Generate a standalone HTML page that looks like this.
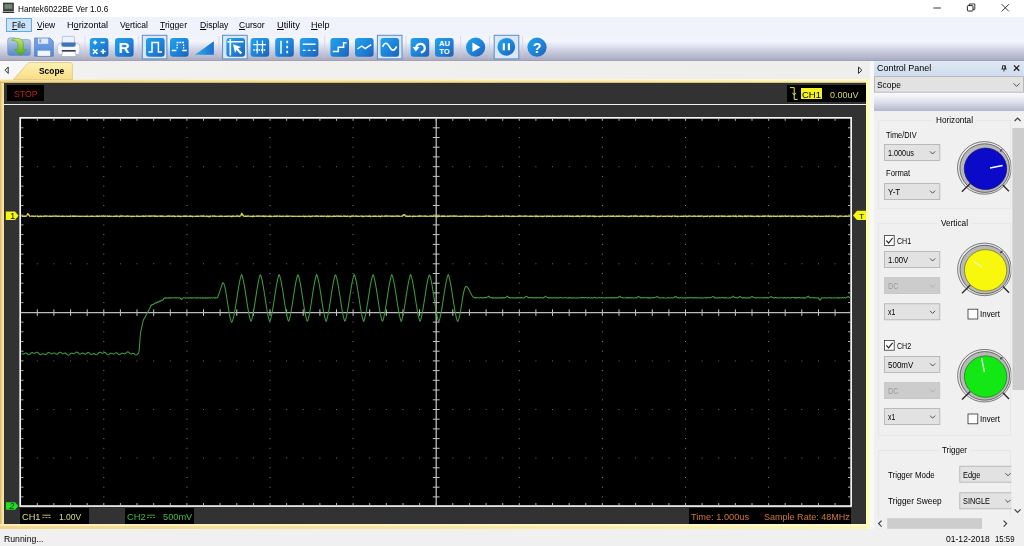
<!DOCTYPE html><html><head><meta charset="utf-8"><title>Hantek6022BE Ver 1.0.6</title><style>
html,body{margin:0;padding:0}
body{width:1024px;height:546px;overflow:hidden;position:relative;background:#f0f0f0;font-family:"Liberation Sans", sans-serif;}
.a{position:absolute}
.t{position:absolute;white-space:nowrap;line-height:1;font-family:"Liberation Sans", sans-serif;display:inline-block;transform-origin:0 0;}
.t u{text-decoration:underline;text-underline-offset:1px;text-decoration-thickness:0.8px}
</style></head><body>
<div class="a" style="left:0;top:0;width:1024px;height:16.6px;background:#fff"></div>
<div class="a" style="left:0;top:16.6px;width:1024px;height:17px;background:#f0f2fc"></div>
<div class="a" style="left:0;top:33.4px;width:1024px;height:28px;background:linear-gradient(#eef0fb 0%,#f2f4fd 8%,#f3f4fc 30%,#dcdeee 50%,#c5c7db 70%,#b1b3c9 90%,#a6a6b8 100%)"></div>
<div class="a" style="left:0;top:60.2px;width:1024px;height:1.2px;background:#a2a2b2"></div>
<div class="a" style="left:6.4px;top:18px;width:25.2px;height:13.7px;background:#cbe3f8;border:1px solid #62aae2;box-sizing:border-box"></div>
<div class="a" style="left:0;top:61.4px;width:870px;height:18.2px;background:linear-gradient(90deg,#f8f8f8 0,#f1f1ef 9%,#eeeeec 100%)"></div>
<div class="a" style="left:0;top:79.2px;width:870.4px;height:449.6px;background:linear-gradient(90deg,#f3d88c 0%,#f6e498 40%,#fbf6b4 100%)"></div>
<div class="a" style="left:0;top:79.2px;width:866px;height:4.2px;background:linear-gradient(rgba(255,255,240,0.75) 0%,rgba(255,250,200,0.15) 40%,rgba(160,130,40,0.0) 60%,rgba(150,125,50,0.55) 100%)"></div>
<div class="a" style="left:0;top:83.4px;width:4.2px;height:441px;background:linear-gradient(90deg,#d8b468,#f6e0a0 60%,#f8e4a8)"></div>
<div class="a" style="left:865.8px;top:80.4px;width:4.6px;height:448.4px;background:#fcfcbc"></div>
<div class="a" style="left:0px;top:524.4px;width:866px;height:1.2px;background:rgba(255,255,235,0.55)"></div>
<div class="a" style="left:4.2px;top:83.4px;width:861.6px;height:441px;background:#323233"></div>
<div class="a" style="left:4.2px;top:103.6px;width:861.6px;height:1.4px;background:#f2f2f2"></div>
<div class="a" style="left:6.8px;top:85.4px;width:37.2px;height:15.6px;background:#000"></div>
<div class="a" style="left:787px;top:85px;width:78.6px;height:17.4px;background:#000"></div>
<div class="a" style="left:801px;top:88.2px;width:21px;height:11px;background:#f4f420"></div>
<div class="a" style="left:20px;top:508.4px;width:69px;height:15.8px;background:#000"></div>
<div class="a" style="left:124.6px;top:508.4px;width:69.6px;height:15.8px;background:#000"></div>
<div class="a" style="left:689.2px;top:508.4px;width:162px;height:15.8px;background:#000"></div>
<svg width="1024" height="546" viewBox="0 0 1024 546" style="position:absolute;left:0;top:0"><defs><linearGradient id="tb" x1="0" y1="0" x2="0" y2="1"><stop offset="0" stop-color="#fdf2b4"/><stop offset="1" stop-color="#f8dc84"/></linearGradient></defs><path d="M13.4 79.6L27.4 63.8Q28.6 62.6 30.4 62.6H70.4Q72.4 62.6 72.4 64.6V79.6Z" fill="url(#tb)" stroke="#d4c080" stroke-width="0.7"/></svg>
<div class="a" style="left:870.4px;top:61.2px;width:4px;height:468px;background:#f8f8f8"></div>
<div class="a" style="left:874.4px;top:60.8px;width:149.6px;height:15.6px;background:linear-gradient(#dfe9f5,#cfdcec)"></div>
<div class="a" style="left:874.4px;top:92.4px;width:149.6px;height:18.4px;background:linear-gradient(#fcfcfe 0%,#f0f1f8 25%,#d8dae8 60%,#b4b7cc 100%)"></div>
<div class="a" style="left:874.4px;top:110.8px;width:149.6px;height:418.6px;background:#f0f0f0"></div>
<svg width="1024" height="546" viewBox="0 0 1024 546" style="position:absolute;left:0;top:0">
<rect x="20.2" y="117.85" width="830.95" height="388.2" fill="#000" stroke="#f4f4f4" stroke-width="1.7"/>
<path d="M103.3 127.8h1M103.3 137.5h1M103.3 147.2h1M103.3 156.9h1M103.3 166.7h1M103.3 176.4h1M103.3 186.1h1M103.3 195.8h1M103.3 205.5h1M103.3 215.2h1M103.3 224.9h1M103.3 234.6h1M103.3 244.4h1M103.3 254.1h1M103.3 263.8h1M103.3 273.5h1M103.3 283.2h1M103.3 292.9h1M103.3 302.6h1M103.3 312.4h1M103.3 322.1h1M103.3 331.8h1M103.3 341.5h1M103.3 351.2h1M103.3 360.9h1M103.3 370.6h1M103.3 380.3h1M103.3 390.0h1M103.3 399.8h1M103.3 409.5h1M103.3 419.2h1M103.3 428.9h1M103.3 438.6h1M103.3 448.3h1M103.3 458.0h1M103.3 467.8h1M103.3 477.5h1M103.3 487.2h1M103.3 496.9h1M186.4 127.8h1M186.4 137.5h1M186.4 147.2h1M186.4 156.9h1M186.4 166.7h1M186.4 176.4h1M186.4 186.1h1M186.4 195.8h1M186.4 205.5h1M186.4 215.2h1M186.4 224.9h1M186.4 234.6h1M186.4 244.4h1M186.4 254.1h1M186.4 263.8h1M186.4 273.5h1M186.4 283.2h1M186.4 292.9h1M186.4 302.6h1M186.4 312.4h1M186.4 322.1h1M186.4 331.8h1M186.4 341.5h1M186.4 351.2h1M186.4 360.9h1M186.4 370.6h1M186.4 380.3h1M186.4 390.0h1M186.4 399.8h1M186.4 409.5h1M186.4 419.2h1M186.4 428.9h1M186.4 438.6h1M186.4 448.3h1M186.4 458.0h1M186.4 467.8h1M186.4 477.5h1M186.4 487.2h1M186.4 496.9h1M269.5 127.8h1M269.5 137.5h1M269.5 147.2h1M269.5 156.9h1M269.5 166.7h1M269.5 176.4h1M269.5 186.1h1M269.5 195.8h1M269.5 205.5h1M269.5 215.2h1M269.5 224.9h1M269.5 234.6h1M269.5 244.4h1M269.5 254.1h1M269.5 263.8h1M269.5 273.5h1M269.5 283.2h1M269.5 292.9h1M269.5 302.6h1M269.5 312.4h1M269.5 322.1h1M269.5 331.8h1M269.5 341.5h1M269.5 351.2h1M269.5 360.9h1M269.5 370.6h1M269.5 380.3h1M269.5 390.0h1M269.5 399.8h1M269.5 409.5h1M269.5 419.2h1M269.5 428.9h1M269.5 438.6h1M269.5 448.3h1M269.5 458.0h1M269.5 467.8h1M269.5 477.5h1M269.5 487.2h1M269.5 496.9h1M352.6 127.8h1M352.6 137.5h1M352.6 147.2h1M352.6 156.9h1M352.6 166.7h1M352.6 176.4h1M352.6 186.1h1M352.6 195.8h1M352.6 205.5h1M352.6 215.2h1M352.6 224.9h1M352.6 234.6h1M352.6 244.4h1M352.6 254.1h1M352.6 263.8h1M352.6 273.5h1M352.6 283.2h1M352.6 292.9h1M352.6 302.6h1M352.6 312.4h1M352.6 322.1h1M352.6 331.8h1M352.6 341.5h1M352.6 351.2h1M352.6 360.9h1M352.6 370.6h1M352.6 380.3h1M352.6 390.0h1M352.6 399.8h1M352.6 409.5h1M352.6 419.2h1M352.6 428.9h1M352.6 438.6h1M352.6 448.3h1M352.6 458.0h1M352.6 467.8h1M352.6 477.5h1M352.6 487.2h1M352.6 496.9h1M518.8 127.8h1M518.8 137.5h1M518.8 147.2h1M518.8 156.9h1M518.8 166.7h1M518.8 176.4h1M518.8 186.1h1M518.8 195.8h1M518.8 205.5h1M518.8 215.2h1M518.8 224.9h1M518.8 234.6h1M518.8 244.4h1M518.8 254.1h1M518.8 263.8h1M518.8 273.5h1M518.8 283.2h1M518.8 292.9h1M518.8 302.6h1M518.8 312.4h1M518.8 322.1h1M518.8 331.8h1M518.8 341.5h1M518.8 351.2h1M518.8 360.9h1M518.8 370.6h1M518.8 380.3h1M518.8 390.0h1M518.8 399.8h1M518.8 409.5h1M518.8 419.2h1M518.8 428.9h1M518.8 438.6h1M518.8 448.3h1M518.8 458.0h1M518.8 467.8h1M518.8 477.5h1M518.8 487.2h1M518.8 496.9h1M601.9 127.8h1M601.9 137.5h1M601.9 147.2h1M601.9 156.9h1M601.9 166.7h1M601.9 176.4h1M601.9 186.1h1M601.9 195.8h1M601.9 205.5h1M601.9 215.2h1M601.9 224.9h1M601.9 234.6h1M601.9 244.4h1M601.9 254.1h1M601.9 263.8h1M601.9 273.5h1M601.9 283.2h1M601.9 292.9h1M601.9 302.6h1M601.9 312.4h1M601.9 322.1h1M601.9 331.8h1M601.9 341.5h1M601.9 351.2h1M601.9 360.9h1M601.9 370.6h1M601.9 380.3h1M601.9 390.0h1M601.9 399.8h1M601.9 409.5h1M601.9 419.2h1M601.9 428.9h1M601.9 438.6h1M601.9 448.3h1M601.9 458.0h1M601.9 467.8h1M601.9 477.5h1M601.9 487.2h1M601.9 496.9h1M685.0 127.8h1M685.0 137.5h1M685.0 147.2h1M685.0 156.9h1M685.0 166.7h1M685.0 176.4h1M685.0 186.1h1M685.0 195.8h1M685.0 205.5h1M685.0 215.2h1M685.0 224.9h1M685.0 234.6h1M685.0 244.4h1M685.0 254.1h1M685.0 263.8h1M685.0 273.5h1M685.0 283.2h1M685.0 292.9h1M685.0 302.6h1M685.0 312.4h1M685.0 322.1h1M685.0 331.8h1M685.0 341.5h1M685.0 351.2h1M685.0 360.9h1M685.0 370.6h1M685.0 380.3h1M685.0 390.0h1M685.0 399.8h1M685.0 409.5h1M685.0 419.2h1M685.0 428.9h1M685.0 438.6h1M685.0 448.3h1M685.0 458.0h1M685.0 467.8h1M685.0 477.5h1M685.0 487.2h1M685.0 496.9h1M768.1 127.8h1M768.1 137.5h1M768.1 147.2h1M768.1 156.9h1M768.1 166.7h1M768.1 176.4h1M768.1 186.1h1M768.1 195.8h1M768.1 205.5h1M768.1 215.2h1M768.1 224.9h1M768.1 234.6h1M768.1 244.4h1M768.1 254.1h1M768.1 263.8h1M768.1 273.5h1M768.1 283.2h1M768.1 292.9h1M768.1 302.6h1M768.1 312.4h1M768.1 322.1h1M768.1 331.8h1M768.1 341.5h1M768.1 351.2h1M768.1 360.9h1M768.1 370.6h1M768.1 380.3h1M768.1 390.0h1M768.1 399.8h1M768.1 409.5h1M768.1 419.2h1M768.1 428.9h1M768.1 438.6h1M768.1 448.3h1M768.1 458.0h1M768.1 467.8h1M768.1 477.5h1M768.1 487.2h1M768.1 496.9h1" stroke="#808080" stroke-width="1" fill="none"/>
<path d="M36.8 166.7h1M53.4 166.7h1M70.1 166.7h1M86.7 166.7h1M119.9 166.7h1M136.5 166.7h1M153.2 166.7h1M169.8 166.7h1M203.0 166.7h1M219.6 166.7h1M236.3 166.7h1M252.9 166.7h1M286.1 166.7h1M302.7 166.7h1M319.4 166.7h1M336.0 166.7h1M369.2 166.7h1M385.8 166.7h1M402.5 166.7h1M419.1 166.7h1M452.3 166.7h1M468.9 166.7h1M485.6 166.7h1M502.2 166.7h1M535.4 166.7h1M552.0 166.7h1M568.7 166.7h1M585.3 166.7h1M618.5 166.7h1M635.1 166.7h1M651.8 166.7h1M668.4 166.7h1M701.6 166.7h1M718.2 166.7h1M734.9 166.7h1M751.5 166.7h1M784.7 166.7h1M801.3 166.7h1M818.0 166.7h1M834.6 166.7h1M36.8 215.2h1M53.4 215.2h1M70.1 215.2h1M86.7 215.2h1M119.9 215.2h1M136.5 215.2h1M153.2 215.2h1M169.8 215.2h1M203.0 215.2h1M219.6 215.2h1M236.3 215.2h1M252.9 215.2h1M286.1 215.2h1M302.7 215.2h1M319.4 215.2h1M336.0 215.2h1M369.2 215.2h1M385.8 215.2h1M402.5 215.2h1M419.1 215.2h1M452.3 215.2h1M468.9 215.2h1M485.6 215.2h1M502.2 215.2h1M535.4 215.2h1M552.0 215.2h1M568.7 215.2h1M585.3 215.2h1M618.5 215.2h1M635.1 215.2h1M651.8 215.2h1M668.4 215.2h1M701.6 215.2h1M718.2 215.2h1M734.9 215.2h1M751.5 215.2h1M784.7 215.2h1M801.3 215.2h1M818.0 215.2h1M834.6 215.2h1M36.8 263.8h1M53.4 263.8h1M70.1 263.8h1M86.7 263.8h1M119.9 263.8h1M136.5 263.8h1M153.2 263.8h1M169.8 263.8h1M203.0 263.8h1M219.6 263.8h1M236.3 263.8h1M252.9 263.8h1M286.1 263.8h1M302.7 263.8h1M319.4 263.8h1M336.0 263.8h1M369.2 263.8h1M385.8 263.8h1M402.5 263.8h1M419.1 263.8h1M452.3 263.8h1M468.9 263.8h1M485.6 263.8h1M502.2 263.8h1M535.4 263.8h1M552.0 263.8h1M568.7 263.8h1M585.3 263.8h1M618.5 263.8h1M635.1 263.8h1M651.8 263.8h1M668.4 263.8h1M701.6 263.8h1M718.2 263.8h1M734.9 263.8h1M751.5 263.8h1M784.7 263.8h1M801.3 263.8h1M818.0 263.8h1M834.6 263.8h1M36.8 360.9h1M53.4 360.9h1M70.1 360.9h1M86.7 360.9h1M119.9 360.9h1M136.5 360.9h1M153.2 360.9h1M169.8 360.9h1M203.0 360.9h1M219.6 360.9h1M236.3 360.9h1M252.9 360.9h1M286.1 360.9h1M302.7 360.9h1M319.4 360.9h1M336.0 360.9h1M369.2 360.9h1M385.8 360.9h1M402.5 360.9h1M419.1 360.9h1M452.3 360.9h1M468.9 360.9h1M485.6 360.9h1M502.2 360.9h1M535.4 360.9h1M552.0 360.9h1M568.7 360.9h1M585.3 360.9h1M618.5 360.9h1M635.1 360.9h1M651.8 360.9h1M668.4 360.9h1M701.6 360.9h1M718.2 360.9h1M734.9 360.9h1M751.5 360.9h1M784.7 360.9h1M801.3 360.9h1M818.0 360.9h1M834.6 360.9h1M36.8 409.5h1M53.4 409.5h1M70.1 409.5h1M86.7 409.5h1M119.9 409.5h1M136.5 409.5h1M153.2 409.5h1M169.8 409.5h1M203.0 409.5h1M219.6 409.5h1M236.3 409.5h1M252.9 409.5h1M286.1 409.5h1M302.7 409.5h1M319.4 409.5h1M336.0 409.5h1M369.2 409.5h1M385.8 409.5h1M402.5 409.5h1M419.1 409.5h1M452.3 409.5h1M468.9 409.5h1M485.6 409.5h1M502.2 409.5h1M535.4 409.5h1M552.0 409.5h1M568.7 409.5h1M585.3 409.5h1M618.5 409.5h1M635.1 409.5h1M651.8 409.5h1M668.4 409.5h1M701.6 409.5h1M718.2 409.5h1M734.9 409.5h1M751.5 409.5h1M784.7 409.5h1M801.3 409.5h1M818.0 409.5h1M834.6 409.5h1M36.8 458.0h1M53.4 458.0h1M70.1 458.0h1M86.7 458.0h1M119.9 458.0h1M136.5 458.0h1M153.2 458.0h1M169.8 458.0h1M203.0 458.0h1M219.6 458.0h1M236.3 458.0h1M252.9 458.0h1M286.1 458.0h1M302.7 458.0h1M319.4 458.0h1M336.0 458.0h1M369.2 458.0h1M385.8 458.0h1M402.5 458.0h1M419.1 458.0h1M452.3 458.0h1M468.9 458.0h1M485.6 458.0h1M502.2 458.0h1M535.4 458.0h1M552.0 458.0h1M568.7 458.0h1M585.3 458.0h1M618.5 458.0h1M635.1 458.0h1M651.8 458.0h1M668.4 458.0h1M701.6 458.0h1M718.2 458.0h1M734.9 458.0h1M751.5 458.0h1M784.7 458.0h1M801.3 458.0h1M818.0 458.0h1M834.6 458.0h1" stroke="#686868" stroke-width="1" fill="none"/>
<path d="M37.3 118.6v2.2M37.3 505.3v-2.2M53.9 118.6v2.2M53.9 505.3v-2.2M70.6 118.6v2.2M70.6 505.3v-2.2M87.2 118.6v2.2M87.2 505.3v-2.2M103.8 118.6v2.2M103.8 505.3v-2.2M120.4 118.6v2.2M120.4 505.3v-2.2M137.0 118.6v2.2M137.0 505.3v-2.2M153.7 118.6v2.2M153.7 505.3v-2.2M170.3 118.6v2.2M170.3 505.3v-2.2M186.9 118.6v2.2M186.9 505.3v-2.2M203.5 118.6v2.2M203.5 505.3v-2.2M220.1 118.6v2.2M220.1 505.3v-2.2M236.8 118.6v2.2M236.8 505.3v-2.2M253.4 118.6v2.2M253.4 505.3v-2.2M270.0 118.6v2.2M270.0 505.3v-2.2M286.6 118.6v2.2M286.6 505.3v-2.2M303.2 118.6v2.2M303.2 505.3v-2.2M319.9 118.6v2.2M319.9 505.3v-2.2M336.5 118.6v2.2M336.5 505.3v-2.2M353.1 118.6v2.2M353.1 505.3v-2.2M369.7 118.6v2.2M369.7 505.3v-2.2M386.3 118.6v2.2M386.3 505.3v-2.2M403.0 118.6v2.2M403.0 505.3v-2.2M419.6 118.6v2.2M419.6 505.3v-2.2M436.2 118.6v2.2M436.2 505.3v-2.2M452.8 118.6v2.2M452.8 505.3v-2.2M469.4 118.6v2.2M469.4 505.3v-2.2M486.1 118.6v2.2M486.1 505.3v-2.2M502.7 118.6v2.2M502.7 505.3v-2.2M519.3 118.6v2.2M519.3 505.3v-2.2M535.9 118.6v2.2M535.9 505.3v-2.2M552.5 118.6v2.2M552.5 505.3v-2.2M569.2 118.6v2.2M569.2 505.3v-2.2M585.8 118.6v2.2M585.8 505.3v-2.2M602.4 118.6v2.2M602.4 505.3v-2.2M619.0 118.6v2.2M619.0 505.3v-2.2M635.6 118.6v2.2M635.6 505.3v-2.2M652.3 118.6v2.2M652.3 505.3v-2.2M668.9 118.6v2.2M668.9 505.3v-2.2M685.5 118.6v2.2M685.5 505.3v-2.2M702.1 118.6v2.2M702.1 505.3v-2.2M718.7 118.6v2.2M718.7 505.3v-2.2M735.4 118.6v2.2M735.4 505.3v-2.2M752.0 118.6v2.2M752.0 505.3v-2.2M768.6 118.6v2.2M768.6 505.3v-2.2M785.2 118.6v2.2M785.2 505.3v-2.2M801.8 118.6v2.2M801.8 505.3v-2.2M818.5 118.6v2.2M818.5 505.3v-2.2M835.1 118.6v2.2M835.1 505.3v-2.2M21.2 127.8h2.2M850.3 127.8h-2.2M21.2 137.5h2.2M850.3 137.5h-2.2M21.2 147.2h2.2M850.3 147.2h-2.2M21.2 156.9h2.2M850.3 156.9h-2.2M21.2 166.7h2.2M850.3 166.7h-2.2M21.2 176.4h2.2M850.3 176.4h-2.2M21.2 186.1h2.2M850.3 186.1h-2.2M21.2 195.8h2.2M850.3 195.8h-2.2M21.2 205.5h2.2M850.3 205.5h-2.2M21.2 215.2h2.2M850.3 215.2h-2.2M21.2 224.9h2.2M850.3 224.9h-2.2M21.2 234.6h2.2M850.3 234.6h-2.2M21.2 244.4h2.2M850.3 244.4h-2.2M21.2 254.1h2.2M850.3 254.1h-2.2M21.2 263.8h2.2M850.3 263.8h-2.2M21.2 273.5h2.2M850.3 273.5h-2.2M21.2 283.2h2.2M850.3 283.2h-2.2M21.2 292.9h2.2M850.3 292.9h-2.2M21.2 302.6h2.2M850.3 302.6h-2.2M21.2 312.4h2.2M850.3 312.4h-2.2M21.2 322.1h2.2M850.3 322.1h-2.2M21.2 331.8h2.2M850.3 331.8h-2.2M21.2 341.5h2.2M850.3 341.5h-2.2M21.2 351.2h2.2M850.3 351.2h-2.2M21.2 360.9h2.2M850.3 360.9h-2.2M21.2 370.6h2.2M850.3 370.6h-2.2M21.2 380.3h2.2M850.3 380.3h-2.2M21.2 390.0h2.2M850.3 390.0h-2.2M21.2 399.8h2.2M850.3 399.8h-2.2M21.2 409.5h2.2M850.3 409.5h-2.2M21.2 419.2h2.2M850.3 419.2h-2.2M21.2 428.9h2.2M850.3 428.9h-2.2M21.2 438.6h2.2M850.3 438.6h-2.2M21.2 448.3h2.2M850.3 448.3h-2.2M21.2 458.0h2.2M850.3 458.0h-2.2M21.2 467.8h2.2M850.3 467.8h-2.2M21.2 477.5h2.2M850.3 477.5h-2.2M21.2 487.2h2.2M850.3 487.2h-2.2M21.2 496.9h2.2M850.3 496.9h-2.2" stroke="#b8b8b8" stroke-width="1" fill="none"/>
<path d="M20.7 312.6H850.7M436.2 118.1V505.8" stroke="#bcbcbc" stroke-width="1.3" fill="none"/>
<path d="M37.3 309.3v6.6M53.9 309.3v6.6M70.6 309.3v6.6M87.2 309.3v6.6M103.8 309.3v6.6M120.4 309.3v6.6M137.0 309.3v6.6M153.7 309.3v6.6M170.3 309.3v6.6M186.9 309.3v6.6M203.5 309.3v6.6M220.1 309.3v6.6M236.8 309.3v6.6M253.4 309.3v6.6M270.0 309.3v6.6M286.6 309.3v6.6M303.2 309.3v6.6M319.9 309.3v6.6M336.5 309.3v6.6M353.1 309.3v6.6M369.7 309.3v6.6M386.3 309.3v6.6M403.0 309.3v6.6M419.6 309.3v6.6M436.2 309.3v6.6M452.8 309.3v6.6M469.4 309.3v6.6M486.1 309.3v6.6M502.7 309.3v6.6M519.3 309.3v6.6M535.9 309.3v6.6M552.5 309.3v6.6M569.2 309.3v6.6M585.8 309.3v6.6M602.4 309.3v6.6M619.0 309.3v6.6M635.6 309.3v6.6M652.3 309.3v6.6M668.9 309.3v6.6M685.5 309.3v6.6M702.1 309.3v6.6M718.7 309.3v6.6M735.4 309.3v6.6M752.0 309.3v6.6M768.6 309.3v6.6M785.2 309.3v6.6M801.8 309.3v6.6M818.5 309.3v6.6M835.1 309.3v6.6M432.8 127.8h6.8M432.8 137.5h6.8M432.8 147.2h6.8M432.8 156.9h6.8M432.8 166.7h6.8M432.8 176.4h6.8M432.8 186.1h6.8M432.8 195.8h6.8M432.8 205.5h6.8M432.8 215.2h6.8M432.8 224.9h6.8M432.8 234.6h6.8M432.8 244.4h6.8M432.8 254.1h6.8M432.8 263.8h6.8M432.8 273.5h6.8M432.8 283.2h6.8M432.8 292.9h6.8M432.8 302.6h6.8M432.8 312.4h6.8M432.8 322.1h6.8M432.8 331.8h6.8M432.8 341.5h6.8M432.8 351.2h6.8M432.8 360.9h6.8M432.8 370.6h6.8M432.8 380.3h6.8M432.8 390.0h6.8M432.8 399.8h6.8M432.8 409.5h6.8M432.8 419.2h6.8M432.8 428.9h6.8M432.8 438.6h6.8M432.8 448.3h6.8M432.8 458.0h6.8M432.8 467.8h6.8M432.8 477.5h6.8M432.8 487.2h6.8M432.8 496.9h6.8" stroke="#c4c4c4" stroke-width="1" fill="none"/>
<polyline points="21.7,216.23 22.7,216.16 23.7,216.36 24.7,216.13 25.7,216.31 26.7,215.72 27.7,213.85 28.7,214.73 29.7,216.11 30.7,216.27 31.7,216.13 32.7,216.14 33.7,216.27 34.7,216.43 35.7,216.15 36.7,216.19 37.7,216.35 38.7,216.48 39.7,216.33 40.7,216.26 41.7,216.49 42.7,216.12 43.7,216.44 44.7,216.22 45.7,216.16 46.7,216.15 47.7,216.22 48.7,216.43 49.7,216.17 50.7,216.33 51.7,216.36 52.7,216.25 53.7,216.32 54.7,216.13 55.7,216.12 56.7,216.18 57.7,216.37 58.7,216.27 59.7,216.23 60.7,216.33 61.7,216.28 62.7,216.22 63.7,216.42 64.7,216.38 65.7,216.20 66.7,216.33 67.7,216.31 68.7,216.45 69.7,216.39 70.7,216.22 71.7,216.49 72.7,216.15 73.7,216.27 74.7,216.40 75.7,216.16 76.7,216.30 77.7,216.12 78.7,216.37 79.7,216.41 80.7,216.33 81.7,216.45 82.7,216.23 83.7,216.38 84.7,216.34 85.7,216.33 86.7,216.28 87.7,216.44 88.7,216.48 89.7,216.29 90.7,216.37 91.7,216.12 92.7,216.38 93.7,216.36 94.7,216.50 95.7,216.43 96.7,216.21 97.7,216.25 98.7,216.37 99.7,216.11 100.7,216.28 101.7,216.17 102.7,216.15 103.7,216.12 104.7,216.41 105.7,216.15 106.7,216.20 107.7,216.26 108.7,216.45 109.7,216.13 110.7,216.28 111.7,216.32 112.7,216.45 113.7,216.43 114.7,216.45 115.7,216.21 116.7,216.27 117.7,216.24 118.7,216.45 119.7,216.48 120.7,216.16 121.7,216.17 122.7,216.19 123.7,216.19 124.7,216.29 125.7,216.34 126.7,216.21 127.7,216.10 128.7,216.27 129.7,216.25 130.7,216.33 131.7,216.48 132.7,216.38 133.7,216.31 134.7,216.35 135.7,216.37 136.7,216.12 137.7,216.46 138.7,216.41 139.7,216.45 140.7,216.42 141.7,216.26 142.7,216.26 143.7,216.14 144.7,216.35 145.7,216.12 146.7,216.13 147.7,216.18 148.7,216.16 149.7,216.24 150.7,216.12 151.7,216.10 152.7,216.16 153.7,216.14 154.7,216.25 155.7,216.11 156.7,216.45 157.7,216.35 158.7,216.16 159.7,216.20 160.7,216.24 161.7,216.25 162.7,216.15 163.7,216.44 164.7,216.50 165.7,216.29 166.7,216.29 167.7,216.13 168.7,216.14 169.7,216.24 170.7,216.21 171.7,216.43 172.7,216.16 173.7,216.11 174.7,216.48 175.7,216.31 176.7,216.16 177.7,216.32 178.7,216.11 179.7,216.31 180.7,216.49 181.7,216.45 182.7,216.38 183.7,216.20 184.7,216.25 185.7,216.17 186.7,216.41 187.7,216.31 188.7,216.41 189.7,216.23 190.7,216.19 191.7,216.42 192.7,216.49 193.7,216.44 194.7,216.42 195.7,216.43 196.7,216.40 197.7,216.19 198.7,216.31 199.7,216.24 200.7,216.11 201.7,216.11 202.7,216.21 203.7,216.20 204.7,216.38 205.7,216.48 206.7,216.28 207.7,216.47 208.7,216.50 209.7,216.48 210.7,216.25 211.7,216.19 212.7,216.19 213.7,216.18 214.7,216.18 215.7,216.35 216.7,216.46 217.7,216.44 218.7,216.29 219.7,216.36 220.7,216.42 221.7,216.13 222.7,216.36 223.7,216.46 224.7,216.41 225.7,216.40 226.7,216.29 227.7,216.17 228.7,216.42 229.7,216.23 230.7,216.42 231.7,216.49 232.7,216.26 233.7,216.26 234.7,216.48 235.7,216.39 236.7,216.17 237.7,216.15 238.7,216.16 239.7,216.46 240.7,215.86 241.7,213.72 242.7,214.74 243.7,216.49 244.7,216.36 245.7,216.24 246.7,216.32 247.7,216.15 248.7,216.11 249.7,216.49 250.7,216.36 251.7,216.31 252.7,216.47 253.7,216.27 254.7,216.45 255.7,216.43 256.7,216.18 257.7,216.20 258.7,216.22 259.7,216.20 260.7,216.33 261.7,216.20 262.7,216.27 263.7,216.15 264.7,216.46 265.7,216.24 266.7,216.28 267.7,216.33 268.7,216.46 269.7,216.27 270.7,216.47 271.7,216.30 272.7,216.31 273.7,216.31 274.7,216.11 275.7,216.28 276.7,216.17 277.7,216.10 278.7,216.42 279.7,216.17 280.7,216.29 281.7,216.39 282.7,216.32 283.7,216.23 284.7,216.31 285.7,216.32 286.7,216.41 287.7,216.14 288.7,216.32 289.7,216.20 290.7,216.21 291.7,216.41 292.7,216.30 293.7,216.32 294.7,216.40 295.7,216.46 296.7,216.28 297.7,216.35 298.7,216.30 299.7,216.30 300.7,216.38 301.7,216.28 302.7,216.31 303.7,216.29 304.7,216.48 305.7,216.38 306.7,216.45 307.7,216.48 308.7,216.20 309.7,216.32 310.7,216.48 311.7,216.44 312.7,216.15 313.7,216.15 314.7,216.28 315.7,216.13 316.7,216.20 317.7,216.13 318.7,216.37 319.7,216.41 320.7,216.46 321.7,216.16 322.7,216.39 323.7,216.36 324.7,216.16 325.7,216.45 326.7,216.49 327.7,216.19 328.7,216.48 329.7,216.26 330.7,216.29 331.7,216.50 332.7,216.43 333.7,216.16 334.7,216.27 335.7,216.31 336.7,216.24 337.7,216.18 338.7,216.23 339.7,216.39 340.7,216.11 341.7,216.32 342.7,216.28 343.7,216.11 344.7,216.23 345.7,216.35 346.7,216.30 347.7,216.13 348.7,216.49 349.7,216.42 350.7,216.49 351.7,216.14 352.7,216.21 353.7,216.12 354.7,216.41 355.7,216.21 356.7,216.15 357.7,216.27 358.7,216.46 359.7,216.43 360.7,216.20 361.7,216.16 362.7,216.47 363.7,216.33 364.7,216.38 365.7,216.14 366.7,216.12 367.7,216.38 368.7,216.27 369.7,216.13 370.7,216.48 371.7,216.35 372.7,216.42 373.7,216.13 374.7,216.44 375.7,216.13 376.7,216.45 377.7,216.28 378.7,216.24 379.7,216.32 380.7,216.47 381.7,216.21 382.7,216.15 383.7,216.31 384.7,216.20 385.7,216.14 386.7,216.16 387.7,216.12 388.7,216.18 389.7,216.22 390.7,216.22 391.7,216.40 392.7,216.22 393.7,216.30 394.7,216.17 395.7,216.24 396.7,216.11 397.7,216.20 398.7,216.11 399.7,216.39 400.7,216.32 401.7,216.18 402.7,215.88 403.7,214.69 404.7,214.91 405.7,216.43 406.7,216.27 407.7,216.30 408.7,216.43 409.7,216.26 410.7,216.30 411.7,216.38 412.7,216.49 413.7,216.24 414.7,216.43 415.7,216.38 416.7,216.35 417.7,216.26 418.7,216.24 419.7,216.12 420.7,216.15 421.7,216.13 422.7,216.40 423.7,216.20 424.7,216.17 425.7,216.13 426.7,216.44 427.7,216.45 428.7,216.37 429.7,216.21 430.7,216.20 431.7,216.22 432.7,216.28 433.7,216.16 434.7,216.28 435.7,216.21 436.7,216.48 437.7,216.49 438.7,216.32 439.7,216.20 440.7,216.49 441.7,216.22 442.7,216.24 443.7,216.10 444.7,216.25 445.7,216.29 446.7,216.30 447.7,216.18 448.7,216.30 449.7,216.10 450.7,216.21 451.7,216.14 452.7,216.26 453.7,216.12 454.7,216.11 455.7,216.22 456.7,216.19 457.7,216.33 458.7,216.31 459.7,216.40 460.7,216.36 461.7,216.39 462.7,216.45 463.7,216.26 464.7,216.23 465.7,216.49 466.7,216.16 467.7,216.39 468.7,216.36 469.7,216.12 470.7,216.43 471.7,216.46 472.7,216.35 473.7,216.39 474.7,216.42 475.7,216.16 476.7,216.31 477.7,216.30 478.7,216.43 479.7,216.42 480.7,216.43 481.7,216.33 482.7,216.46 483.7,216.37 484.7,216.38 485.7,216.19 486.7,216.11 487.7,216.15 488.7,216.24 489.7,216.14 490.7,216.43 491.7,216.32 492.7,216.35 493.7,216.35 494.7,216.37 495.7,216.30 496.7,216.10 497.7,216.42 498.7,216.40 499.7,216.30 500.7,216.31 501.7,216.36 502.7,216.13 503.7,216.39 504.7,216.20 505.7,216.13 506.7,216.21 507.7,216.39 508.7,216.18 509.7,216.40 510.7,216.49 511.7,216.30 512.7,216.25 513.7,216.29 514.7,216.37 515.7,216.41 516.7,216.35 517.7,216.36 518.7,216.13 519.7,216.16 520.7,216.20 521.7,216.40 522.7,216.22 523.7,216.33 524.7,216.10 525.7,216.12 526.7,216.21 527.7,216.37 528.7,216.38 529.7,216.37 530.7,216.22 531.7,216.31 532.7,216.29 533.7,216.29 534.7,216.15 535.7,216.46 536.7,216.18 537.7,216.49 538.7,216.47 539.7,216.11 540.7,216.28 541.7,216.43 542.7,216.49 543.7,216.28 544.7,216.21 545.7,216.18 546.7,216.48 547.7,216.18 548.7,216.33 549.7,216.16 550.7,216.31 551.7,216.48 552.7,216.15 553.7,216.43 554.7,216.30 555.7,216.45 556.7,216.38 557.7,216.19 558.7,216.46 559.7,216.29 560.7,216.11 561.7,216.10 562.7,216.30 563.7,216.28 564.7,216.22 565.7,216.16 566.7,216.24 567.7,216.23 568.7,216.44 569.7,216.10 570.7,216.40 571.7,216.44 572.7,216.15 573.7,216.47 574.7,216.39 575.7,216.46 576.7,216.22 577.7,216.25 578.7,216.26 579.7,216.50 580.7,216.34 581.7,216.24 582.7,216.27 583.7,216.21 584.7,216.12 585.7,216.14 586.7,216.43 587.7,216.21 588.7,216.47 589.7,216.20 590.7,216.21 591.7,216.30 592.7,216.18 593.7,216.25 594.7,216.48 595.7,216.45 596.7,216.42 597.7,216.35 598.7,216.47 599.7,216.48 600.7,216.32 601.7,216.39 602.7,216.12 603.7,216.39 604.7,216.28 605.7,216.40 606.7,216.36 607.7,216.21 608.7,216.12 609.7,216.47 610.7,216.15 611.7,216.29 612.7,216.24 613.7,216.22 614.7,216.40 615.7,216.49 616.7,216.20 617.7,216.36 618.7,216.22 619.7,216.32 620.7,216.26 621.7,216.17 622.7,216.16 623.7,216.18 624.7,216.46 625.7,216.30 626.7,216.19 627.7,216.46 628.7,216.50 629.7,216.28 630.7,216.16 631.7,216.18 632.7,216.14 633.7,216.24 634.7,216.14 635.7,216.20 636.7,216.20 637.7,216.33 638.7,216.45 639.7,216.40 640.7,216.27 641.7,216.27 642.7,216.31 643.7,216.25 644.7,216.24 645.7,216.12 646.7,216.21 647.7,216.49 648.7,216.15 649.7,216.30 650.7,216.35 651.7,216.45 652.7,216.19 653.7,216.21 654.7,216.20 655.7,216.26 656.7,216.28 657.7,216.48 658.7,216.44 659.7,216.45 660.7,216.11 661.7,216.11 662.7,216.38 663.7,216.46 664.7,216.29 665.7,216.33 666.7,216.10 667.7,216.26 668.7,216.47 669.7,216.43 670.7,216.44 671.7,216.49 672.7,216.20 673.7,216.14 674.7,216.16 675.7,216.31 676.7,216.37 677.7,216.48 678.7,216.39 679.7,216.36 680.7,216.41 681.7,216.28 682.7,216.32 683.7,216.12 684.7,216.41 685.7,216.19 686.7,216.47 687.7,216.36 688.7,216.22 689.7,216.15 690.7,216.20 691.7,216.35 692.7,216.38 693.7,216.14 694.7,216.13 695.7,216.31 696.7,216.33 697.7,216.26 698.7,216.19 699.7,216.34 700.7,216.10 701.7,216.22 702.7,216.28 703.7,216.48 704.7,216.36 705.7,216.45 706.7,216.29 707.7,216.19 708.7,216.20 709.7,216.48 710.7,216.38 711.7,216.22 712.7,216.11 713.7,216.30 714.7,216.37 715.7,216.27 716.7,216.20 717.7,216.37 718.7,216.47 719.7,216.19 720.7,216.11 721.7,216.24 722.7,216.27 723.7,216.37 724.7,216.18 725.7,216.42 726.7,216.40 727.7,216.30 728.7,216.18 729.7,216.49 730.7,216.22 731.7,216.43 732.7,216.19 733.7,216.19 734.7,216.40 735.7,216.22 736.7,216.48 737.7,216.30 738.7,216.17 739.7,216.19 740.7,216.27 741.7,216.37 742.7,216.48 743.7,216.16 744.7,216.26 745.7,216.19 746.7,216.49 747.7,216.16 748.7,216.12 749.7,216.12 750.7,216.26 751.7,216.46 752.7,216.45 753.7,216.39 754.7,216.50 755.7,216.47 756.7,216.23 757.7,216.17 758.7,216.47 759.7,216.40 760.7,216.11 761.7,216.37 762.7,216.25 763.7,216.25 764.7,216.23 765.7,216.17 766.7,216.10 767.7,216.21 768.7,216.24 769.7,216.48 770.7,216.15 771.7,216.49 772.7,216.18 773.7,216.24 774.7,216.43 775.7,216.43 776.7,216.27 777.7,216.12 778.7,216.29 779.7,216.25 780.7,216.47 781.7,216.18 782.7,216.25 783.7,216.46 784.7,216.11 785.7,216.26 786.7,216.42 787.7,216.41 788.7,216.12 789.7,216.11 790.7,216.13 791.7,216.47 792.7,216.20 793.7,216.40 794.7,216.46 795.7,216.24 796.7,216.21 797.7,216.48 798.7,216.35 799.7,216.20 800.7,216.39 801.7,216.23 802.7,216.21 803.7,216.10 804.7,216.40 805.7,216.47 806.7,216.35 807.7,216.48 808.7,216.11 809.7,216.19 810.7,216.29 811.7,216.48 812.7,216.48 813.7,216.25 814.7,216.20 815.7,216.27 816.7,216.30 817.7,216.47 818.7,216.17 819.7,216.42 820.7,216.40 821.7,216.43 822.7,216.41 823.7,216.34 824.7,216.23 825.7,216.23 826.7,216.24 827.7,216.41 828.7,216.13 829.7,216.18 830.7,216.40 831.7,216.20 832.7,216.13 833.7,216.11 834.7,216.32 835.7,216.23 836.7,216.49 837.7,216.45 838.7,216.50 839.7,216.21 840.7,216.13 841.7,216.14 842.7,216.30 843.7,216.38 844.7,216.28 845.7,216.19 846.7,216.27 847.7,216.35 848.7,216.37 849.7,216.40" fill="none" stroke="#90903c" stroke-width="1.3"/>
<polyline points="21.7,216.23 22.7,216.16 23.7,216.36 24.7,216.13 25.7,216.31 26.7,215.72 27.7,213.85 28.7,214.73 29.7,216.11 30.7,216.27 31.7,216.13 32.7,216.14 33.7,216.27 34.7,216.43 35.7,216.15 36.7,216.19 37.7,216.35 38.7,216.48 39.7,216.33 40.7,216.26 41.7,216.49 42.7,216.12 43.7,216.44 44.7,216.22 45.7,216.16 46.7,216.15 47.7,216.22 48.7,216.43 49.7,216.17 50.7,216.33 51.7,216.36 52.7,216.25 53.7,216.32 54.7,216.13 55.7,216.12 56.7,216.18 57.7,216.37 58.7,216.27 59.7,216.23 60.7,216.33 61.7,216.28 62.7,216.22 63.7,216.42 64.7,216.38 65.7,216.20 66.7,216.33 67.7,216.31 68.7,216.45 69.7,216.39 70.7,216.22 71.7,216.49 72.7,216.15 73.7,216.27 74.7,216.40 75.7,216.16 76.7,216.30 77.7,216.12 78.7,216.37 79.7,216.41 80.7,216.33 81.7,216.45 82.7,216.23 83.7,216.38 84.7,216.34 85.7,216.33 86.7,216.28 87.7,216.44 88.7,216.48 89.7,216.29 90.7,216.37 91.7,216.12 92.7,216.38 93.7,216.36 94.7,216.50 95.7,216.43 96.7,216.21 97.7,216.25 98.7,216.37 99.7,216.11 100.7,216.28 101.7,216.17 102.7,216.15 103.7,216.12 104.7,216.41 105.7,216.15 106.7,216.20 107.7,216.26 108.7,216.45 109.7,216.13 110.7,216.28 111.7,216.32 112.7,216.45 113.7,216.43 114.7,216.45 115.7,216.21 116.7,216.27 117.7,216.24 118.7,216.45 119.7,216.48 120.7,216.16 121.7,216.17 122.7,216.19 123.7,216.19 124.7,216.29 125.7,216.34 126.7,216.21 127.7,216.10 128.7,216.27 129.7,216.25 130.7,216.33 131.7,216.48 132.7,216.38 133.7,216.31 134.7,216.35 135.7,216.37 136.7,216.12 137.7,216.46 138.7,216.41 139.7,216.45 140.7,216.42 141.7,216.26 142.7,216.26 143.7,216.14 144.7,216.35 145.7,216.12 146.7,216.13 147.7,216.18 148.7,216.16 149.7,216.24 150.7,216.12 151.7,216.10 152.7,216.16 153.7,216.14 154.7,216.25 155.7,216.11 156.7,216.45 157.7,216.35 158.7,216.16 159.7,216.20 160.7,216.24 161.7,216.25 162.7,216.15 163.7,216.44 164.7,216.50 165.7,216.29 166.7,216.29 167.7,216.13 168.7,216.14 169.7,216.24 170.7,216.21 171.7,216.43 172.7,216.16 173.7,216.11 174.7,216.48 175.7,216.31 176.7,216.16 177.7,216.32 178.7,216.11 179.7,216.31 180.7,216.49 181.7,216.45 182.7,216.38 183.7,216.20 184.7,216.25 185.7,216.17 186.7,216.41 187.7,216.31 188.7,216.41 189.7,216.23 190.7,216.19 191.7,216.42 192.7,216.49 193.7,216.44 194.7,216.42 195.7,216.43 196.7,216.40 197.7,216.19 198.7,216.31 199.7,216.24 200.7,216.11 201.7,216.11 202.7,216.21 203.7,216.20 204.7,216.38 205.7,216.48 206.7,216.28 207.7,216.47 208.7,216.50 209.7,216.48 210.7,216.25 211.7,216.19 212.7,216.19 213.7,216.18 214.7,216.18 215.7,216.35 216.7,216.46 217.7,216.44 218.7,216.29 219.7,216.36 220.7,216.42 221.7,216.13 222.7,216.36 223.7,216.46 224.7,216.41 225.7,216.40 226.7,216.29 227.7,216.17 228.7,216.42 229.7,216.23 230.7,216.42 231.7,216.49 232.7,216.26 233.7,216.26 234.7,216.48 235.7,216.39 236.7,216.17 237.7,216.15 238.7,216.16 239.7,216.46 240.7,215.86 241.7,213.72 242.7,214.74 243.7,216.49 244.7,216.36 245.7,216.24 246.7,216.32 247.7,216.15 248.7,216.11 249.7,216.49 250.7,216.36 251.7,216.31 252.7,216.47 253.7,216.27 254.7,216.45 255.7,216.43 256.7,216.18 257.7,216.20 258.7,216.22 259.7,216.20 260.7,216.33 261.7,216.20 262.7,216.27 263.7,216.15 264.7,216.46 265.7,216.24 266.7,216.28 267.7,216.33 268.7,216.46 269.7,216.27 270.7,216.47 271.7,216.30 272.7,216.31 273.7,216.31 274.7,216.11 275.7,216.28 276.7,216.17 277.7,216.10 278.7,216.42 279.7,216.17 280.7,216.29 281.7,216.39 282.7,216.32 283.7,216.23 284.7,216.31 285.7,216.32 286.7,216.41 287.7,216.14 288.7,216.32 289.7,216.20 290.7,216.21 291.7,216.41 292.7,216.30 293.7,216.32 294.7,216.40 295.7,216.46 296.7,216.28 297.7,216.35 298.7,216.30 299.7,216.30 300.7,216.38 301.7,216.28 302.7,216.31 303.7,216.29 304.7,216.48 305.7,216.38 306.7,216.45 307.7,216.48 308.7,216.20 309.7,216.32 310.7,216.48 311.7,216.44 312.7,216.15 313.7,216.15 314.7,216.28 315.7,216.13 316.7,216.20 317.7,216.13 318.7,216.37 319.7,216.41 320.7,216.46 321.7,216.16 322.7,216.39 323.7,216.36 324.7,216.16 325.7,216.45 326.7,216.49 327.7,216.19 328.7,216.48 329.7,216.26 330.7,216.29 331.7,216.50 332.7,216.43 333.7,216.16 334.7,216.27 335.7,216.31 336.7,216.24 337.7,216.18 338.7,216.23 339.7,216.39 340.7,216.11 341.7,216.32 342.7,216.28 343.7,216.11 344.7,216.23 345.7,216.35 346.7,216.30 347.7,216.13 348.7,216.49 349.7,216.42 350.7,216.49 351.7,216.14 352.7,216.21 353.7,216.12 354.7,216.41 355.7,216.21 356.7,216.15 357.7,216.27 358.7,216.46 359.7,216.43 360.7,216.20 361.7,216.16 362.7,216.47 363.7,216.33 364.7,216.38 365.7,216.14 366.7,216.12 367.7,216.38 368.7,216.27 369.7,216.13 370.7,216.48 371.7,216.35 372.7,216.42 373.7,216.13 374.7,216.44 375.7,216.13 376.7,216.45 377.7,216.28 378.7,216.24 379.7,216.32 380.7,216.47 381.7,216.21 382.7,216.15 383.7,216.31 384.7,216.20 385.7,216.14 386.7,216.16 387.7,216.12 388.7,216.18 389.7,216.22 390.7,216.22 391.7,216.40 392.7,216.22 393.7,216.30 394.7,216.17 395.7,216.24 396.7,216.11 397.7,216.20 398.7,216.11 399.7,216.39 400.7,216.32 401.7,216.18 402.7,215.88 403.7,214.69 404.7,214.91 405.7,216.43 406.7,216.27 407.7,216.30 408.7,216.43 409.7,216.26 410.7,216.30 411.7,216.38 412.7,216.49 413.7,216.24 414.7,216.43 415.7,216.38 416.7,216.35 417.7,216.26 418.7,216.24 419.7,216.12 420.7,216.15 421.7,216.13 422.7,216.40 423.7,216.20 424.7,216.17 425.7,216.13 426.7,216.44 427.7,216.45 428.7,216.37 429.7,216.21 430.7,216.20 431.7,216.22 432.7,216.28 433.7,216.16 434.7,216.28 435.7,216.21 436.7,216.48 437.7,216.49 438.7,216.32 439.7,216.20 440.7,216.49 441.7,216.22 442.7,216.24 443.7,216.10 444.7,216.25 445.7,216.29 446.7,216.30 447.7,216.18 448.7,216.30 449.7,216.10 450.7,216.21 451.7,216.14 452.7,216.26 453.7,216.12 454.7,216.11 455.7,216.22 456.7,216.19 457.7,216.33 458.7,216.31 459.7,216.40 460.7,216.36 461.7,216.39 462.7,216.45 463.7,216.26 464.7,216.23 465.7,216.49 466.7,216.16 467.7,216.39 468.7,216.36 469.7,216.12 470.7,216.43 471.7,216.46 472.7,216.35 473.7,216.39 474.7,216.42 475.7,216.16 476.7,216.31 477.7,216.30 478.7,216.43 479.7,216.42 480.7,216.43 481.7,216.33 482.7,216.46 483.7,216.37 484.7,216.38 485.7,216.19 486.7,216.11 487.7,216.15 488.7,216.24 489.7,216.14 490.7,216.43 491.7,216.32 492.7,216.35 493.7,216.35 494.7,216.37 495.7,216.30 496.7,216.10 497.7,216.42 498.7,216.40 499.7,216.30 500.7,216.31 501.7,216.36 502.7,216.13 503.7,216.39 504.7,216.20 505.7,216.13 506.7,216.21 507.7,216.39 508.7,216.18 509.7,216.40 510.7,216.49 511.7,216.30 512.7,216.25 513.7,216.29 514.7,216.37 515.7,216.41 516.7,216.35 517.7,216.36 518.7,216.13 519.7,216.16 520.7,216.20 521.7,216.40 522.7,216.22 523.7,216.33 524.7,216.10 525.7,216.12 526.7,216.21 527.7,216.37 528.7,216.38 529.7,216.37 530.7,216.22 531.7,216.31 532.7,216.29 533.7,216.29 534.7,216.15 535.7,216.46 536.7,216.18 537.7,216.49 538.7,216.47 539.7,216.11 540.7,216.28 541.7,216.43 542.7,216.49 543.7,216.28 544.7,216.21 545.7,216.18 546.7,216.48 547.7,216.18 548.7,216.33 549.7,216.16 550.7,216.31 551.7,216.48 552.7,216.15 553.7,216.43 554.7,216.30 555.7,216.45 556.7,216.38 557.7,216.19 558.7,216.46 559.7,216.29 560.7,216.11 561.7,216.10 562.7,216.30 563.7,216.28 564.7,216.22 565.7,216.16 566.7,216.24 567.7,216.23 568.7,216.44 569.7,216.10 570.7,216.40 571.7,216.44 572.7,216.15 573.7,216.47 574.7,216.39 575.7,216.46 576.7,216.22 577.7,216.25 578.7,216.26 579.7,216.50 580.7,216.34 581.7,216.24 582.7,216.27 583.7,216.21 584.7,216.12 585.7,216.14 586.7,216.43 587.7,216.21 588.7,216.47 589.7,216.20 590.7,216.21 591.7,216.30 592.7,216.18 593.7,216.25 594.7,216.48 595.7,216.45 596.7,216.42 597.7,216.35 598.7,216.47 599.7,216.48 600.7,216.32 601.7,216.39 602.7,216.12 603.7,216.39 604.7,216.28 605.7,216.40 606.7,216.36 607.7,216.21 608.7,216.12 609.7,216.47 610.7,216.15 611.7,216.29 612.7,216.24 613.7,216.22 614.7,216.40 615.7,216.49 616.7,216.20 617.7,216.36 618.7,216.22 619.7,216.32 620.7,216.26 621.7,216.17 622.7,216.16 623.7,216.18 624.7,216.46 625.7,216.30 626.7,216.19 627.7,216.46 628.7,216.50 629.7,216.28 630.7,216.16 631.7,216.18 632.7,216.14 633.7,216.24 634.7,216.14 635.7,216.20 636.7,216.20 637.7,216.33 638.7,216.45 639.7,216.40 640.7,216.27 641.7,216.27 642.7,216.31 643.7,216.25 644.7,216.24 645.7,216.12 646.7,216.21 647.7,216.49 648.7,216.15 649.7,216.30 650.7,216.35 651.7,216.45 652.7,216.19 653.7,216.21 654.7,216.20 655.7,216.26 656.7,216.28 657.7,216.48 658.7,216.44 659.7,216.45 660.7,216.11 661.7,216.11 662.7,216.38 663.7,216.46 664.7,216.29 665.7,216.33 666.7,216.10 667.7,216.26 668.7,216.47 669.7,216.43 670.7,216.44 671.7,216.49 672.7,216.20 673.7,216.14 674.7,216.16 675.7,216.31 676.7,216.37 677.7,216.48 678.7,216.39 679.7,216.36 680.7,216.41 681.7,216.28 682.7,216.32 683.7,216.12 684.7,216.41 685.7,216.19 686.7,216.47 687.7,216.36 688.7,216.22 689.7,216.15 690.7,216.20 691.7,216.35 692.7,216.38 693.7,216.14 694.7,216.13 695.7,216.31 696.7,216.33 697.7,216.26 698.7,216.19 699.7,216.34 700.7,216.10 701.7,216.22 702.7,216.28 703.7,216.48 704.7,216.36 705.7,216.45 706.7,216.29 707.7,216.19 708.7,216.20 709.7,216.48 710.7,216.38 711.7,216.22 712.7,216.11 713.7,216.30 714.7,216.37 715.7,216.27 716.7,216.20 717.7,216.37 718.7,216.47 719.7,216.19 720.7,216.11 721.7,216.24 722.7,216.27 723.7,216.37 724.7,216.18 725.7,216.42 726.7,216.40 727.7,216.30 728.7,216.18 729.7,216.49 730.7,216.22 731.7,216.43 732.7,216.19 733.7,216.19 734.7,216.40 735.7,216.22 736.7,216.48 737.7,216.30 738.7,216.17 739.7,216.19 740.7,216.27 741.7,216.37 742.7,216.48 743.7,216.16 744.7,216.26 745.7,216.19 746.7,216.49 747.7,216.16 748.7,216.12 749.7,216.12 750.7,216.26 751.7,216.46 752.7,216.45 753.7,216.39 754.7,216.50 755.7,216.47 756.7,216.23 757.7,216.17 758.7,216.47 759.7,216.40 760.7,216.11 761.7,216.37 762.7,216.25 763.7,216.25 764.7,216.23 765.7,216.17 766.7,216.10 767.7,216.21 768.7,216.24 769.7,216.48 770.7,216.15 771.7,216.49 772.7,216.18 773.7,216.24 774.7,216.43 775.7,216.43 776.7,216.27 777.7,216.12 778.7,216.29 779.7,216.25 780.7,216.47 781.7,216.18 782.7,216.25 783.7,216.46 784.7,216.11 785.7,216.26 786.7,216.42 787.7,216.41 788.7,216.12 789.7,216.11 790.7,216.13 791.7,216.47 792.7,216.20 793.7,216.40 794.7,216.46 795.7,216.24 796.7,216.21 797.7,216.48 798.7,216.35 799.7,216.20 800.7,216.39 801.7,216.23 802.7,216.21 803.7,216.10 804.7,216.40 805.7,216.47 806.7,216.35 807.7,216.48 808.7,216.11 809.7,216.19 810.7,216.29 811.7,216.48 812.7,216.48 813.7,216.25 814.7,216.20 815.7,216.27 816.7,216.30 817.7,216.47 818.7,216.17 819.7,216.42 820.7,216.40 821.7,216.43 822.7,216.41 823.7,216.34 824.7,216.23 825.7,216.23 826.7,216.24 827.7,216.41 828.7,216.13 829.7,216.18 830.7,216.40 831.7,216.20 832.7,216.13 833.7,216.11 834.7,216.32 835.7,216.23 836.7,216.49 837.7,216.45 838.7,216.50 839.7,216.21 840.7,216.13 841.7,216.14 842.7,216.30 843.7,216.38 844.7,216.28 845.7,216.19 846.7,216.27 847.7,216.35 848.7,216.37 849.7,216.40" fill="none" stroke="#d0d05c" stroke-width="1.3" stroke-dasharray="5 0.9"/>
<polyline points="21.7,353.32 22.2,353.66 22.7,353.91 23.2,354.00 23.7,353.91 24.2,353.67 24.7,353.36 25.2,353.11 25.7,353.00 26.2,353.08 26.7,353.37 27.2,353.77 27.7,354.20 28.2,354.53 28.7,354.66 29.2,354.55 29.7,354.22 30.2,353.75 30.7,353.25 31.2,352.85 31.7,352.62 32.2,352.60 32.7,352.76 33.2,353.00 33.7,353.22 34.2,353.33 34.7,353.26 35.2,353.03 35.7,352.70 36.2,352.38 36.7,352.17 37.2,352.16 37.7,352.39 38.2,352.83 38.7,353.40 39.2,353.96 39.7,354.41 40.2,354.65 40.7,354.66 41.2,354.48 41.7,354.19 42.2,353.91 42.7,353.74 43.2,353.73 43.7,353.89 44.2,354.15 44.7,354.41 45.2,354.57 45.7,354.55 46.2,354.31 46.7,353.89 47.2,353.38 47.7,352.89 48.2,352.54 48.7,352.42 49.2,352.53 49.7,352.83 50.2,353.23 50.7,353.61 51.2,353.87 51.7,353.93 52.2,353.80 52.7,353.55 53.2,353.25 53.7,353.04 54.2,352.97 54.7,353.10 55.2,353.39 55.7,353.75 56.2,354.07 56.7,354.24 57.2,354.20 57.7,353.94 58.2,353.51 58.7,353.01 59.2,352.57 59.7,352.29 60.2,352.24 60.7,352.41 61.2,352.75 61.7,353.14 62.2,353.47 62.7,353.67 63.2,353.68 63.7,353.54 64.2,353.33 64.7,353.14 65.2,353.09 65.7,353.23 66.2,353.56 66.7,354.03 67.2,354.54 67.7,354.95 68.2,355.17 68.7,355.15 69.2,354.89 69.7,354.46 70.2,353.97 70.7,353.55 71.2,353.28 71.7,353.20 72.2,353.30 72.7,353.49 73.2,353.67 73.7,353.74 74.2,353.63 74.7,353.35 75.2,352.95 75.7,352.53 76.2,352.21 76.7,352.08 77.2,352.19 77.7,352.52 78.2,352.99 78.7,353.49 79.2,353.89 79.7,354.12 80.2,354.12 80.7,353.92 81.2,353.62 81.7,353.32 82.2,353.11 82.7,353.08 83.2,353.23 83.7,353.51 84.2,353.82 84.7,354.06 85.2,354.13 85.7,354.00 86.2,353.68 86.7,353.25 87.2,352.83 87.7,352.54 88.2,352.46 88.7,352.62 89.2,352.99 89.7,353.46 90.2,353.93 90.7,354.27 91.2,354.43 91.7,354.38 92.2,354.18 92.7,353.92 93.2,353.70 93.7,353.61 94.2,353.71 94.7,353.95 95.2,354.28 95.7,354.58 96.2,354.73 96.7,354.67 97.2,354.38 97.7,353.90 98.2,353.32 98.7,352.78 99.2,352.39 99.7,352.21 100.2,352.26 100.7,352.49 101.2,352.80 101.7,353.08 102.2,353.23 102.7,353.21 103.2,353.04 103.7,352.79 104.2,352.56 104.7,352.45 105.2,352.55 105.7,352.85 106.2,353.32 106.7,353.85 107.2,354.33 107.7,354.63 108.2,354.71 108.7,354.54 109.2,354.21 109.7,353.80 110.2,353.44 110.7,353.23 111.2,353.20 111.7,353.36 112.2,353.63 112.7,353.90 113.2,354.07 113.7,354.07 114.2,353.88 114.7,353.55 115.2,353.17 115.7,352.86 116.2,352.71 116.7,352.79 117.2,353.09 117.7,353.53 118.2,354.02 118.7,354.41 119.2,354.63 119.7,354.61 120.2,354.39 120.7,354.02 121.2,353.63 121.7,353.33 122.2,353.18 122.7,353.22 123.2,353.39 123.7,353.62 124.2,353.80 124.7,353.82 125.2,353.65 125.7,353.29 126.2,352.82 126.7,352.34 127.2,351.98 127.7,351.84 128.2,351.94 128.7,352.27 129.2,352.74 129.7,353.24 130.2,353.64 130.7,353.87 131.2,353.91 131.7,353.79 132.2,353.59 132.7,353.44 133.2,353.41 133.7,353.55 134.2,353.86 134.7,354.27 135.2,354.66 135.7,354.94 136.2,355.00 136.7,354.81 137.2,354.42 137.7,353.92 138.2,353.41 138.7,353.03 139.2,349.70 139.7,342.87 140.2,336.03 140.7,331.93 141.2,329.66 141.7,327.38 142.2,325.11 142.7,322.83 143.2,320.56 143.7,319.40 144.2,318.52 144.7,317.64 145.2,316.76 145.7,315.88 146.2,315.01 146.7,314.13 147.2,313.20 147.7,312.18 148.2,311.17 148.7,310.16 149.2,309.15 149.7,308.13 150.2,307.54 150.7,306.30 151.2,304.94 151.7,305.54 152.2,304.62 152.7,304.68 153.2,304.19 153.7,304.36 154.2,303.45 154.7,303.25 155.2,302.98 155.7,302.61 156.2,303.22 156.7,302.61 157.2,302.09 157.7,301.96 158.2,302.46 158.7,301.66 159.2,301.11 159.7,301.59 160.2,301.19 160.7,301.38 161.2,300.10 161.7,300.30 162.2,300.38 162.7,300.07 163.2,299.82 163.7,298.43 164.2,298.40 164.7,297.85 165.2,297.60 165.7,298.23 166.2,297.96 166.7,298.20 167.2,297.81 167.7,298.16 168.2,297.86 168.7,297.73 169.2,298.09 169.7,298.21 170.2,297.62 170.7,297.97 171.2,297.98 171.7,297.70 172.2,297.81 172.7,297.65 173.2,297.69 173.7,297.73 174.2,297.97 174.7,298.01 175.2,297.69 175.7,297.56 176.2,297.78 176.7,298.02 177.2,297.68 177.7,297.77 178.2,297.69 178.7,298.11 179.2,297.93 179.7,297.59 180.2,297.86 180.7,298.67 181.2,299.38 181.7,299.56 182.2,298.57 182.7,298.02 183.2,298.04 183.7,297.84 184.2,297.75 184.7,297.77 185.2,298.22 185.7,297.77 186.2,297.95 186.7,297.80 187.2,297.84 187.7,298.15 188.2,298.25 188.7,297.80 189.2,297.69 189.7,298.06 190.2,297.69 190.7,297.55 191.2,298.18 191.7,297.85 192.2,298.12 192.7,297.83 193.2,298.17 193.7,297.87 194.2,297.66 194.7,297.56 195.2,297.94 195.7,298.00 196.2,298.19 196.7,297.61 197.2,297.99 197.7,297.81 198.2,297.90 198.7,297.65 199.2,297.75 199.7,297.91 200.2,298.20 200.7,297.63 201.2,297.89 201.7,298.11 202.2,298.23 202.7,297.69 203.2,297.64 203.7,298.21 204.2,298.23 204.7,297.89 205.2,297.59 205.7,298.20 206.2,297.82 206.7,298.18 207.2,297.98 207.7,298.13 208.2,297.66 208.7,298.10 209.2,297.71 209.7,297.83 210.2,298.14 210.7,298.13 211.2,297.68 211.7,297.70 212.2,297.83 212.7,297.91 213.2,297.82 213.7,297.64 214.2,297.72 214.7,298.06 215.2,298.18 215.7,297.58 216.2,297.94 216.7,298.08 217.2,297.58 217.7,297.42 218.2,295.95 218.7,294.49 219.2,293.03 219.7,291.57 220.2,290.10 220.7,288.64 221.2,287.18 221.7,285.72 222.2,284.25 222.7,282.79 223.2,282.68 223.7,283.40 224.2,284.65 224.7,286.41 225.2,288.61 225.7,291.20 226.2,294.11 226.7,297.25 227.2,300.54 227.7,303.89 228.2,307.20 228.7,310.38 229.2,313.34 229.7,316.00 230.2,318.29 230.7,320.13 231.2,321.49 231.7,322.32 232.2,321.58 232.7,320.32 233.2,318.66 233.7,316.65 234.2,314.33 234.7,311.72 235.2,308.87 235.7,305.82 236.2,302.63 236.7,299.35 237.2,296.05 237.7,292.79 238.2,289.62 238.7,286.60 239.2,283.79 239.7,281.23 240.2,278.96 240.7,277.02 241.2,275.42 241.7,274.63 242.2,276.02 242.7,277.76 243.2,279.83 243.7,282.22 244.2,284.89 244.7,287.79 245.2,290.87 245.7,294.09 246.2,297.37 246.7,300.67 247.2,303.92 247.7,307.06 248.2,310.03 248.7,312.79 249.2,315.29 249.7,317.49 250.2,319.36 250.7,320.88 251.2,321.09 251.7,319.63 252.2,317.81 252.7,315.67 253.2,313.21 253.7,310.49 254.2,307.55 254.7,304.43 255.2,301.19 255.7,297.90 256.2,294.61 256.7,291.38 257.2,288.27 257.7,285.34 258.2,282.63 258.7,280.20 259.2,278.07 259.7,276.27 260.2,274.83 260.7,275.20 261.2,276.74 261.7,278.63 262.2,280.85 262.7,283.37 263.2,286.14 263.7,289.13 264.2,292.27 264.7,295.53 265.2,298.83 265.7,302.11 266.2,305.32 266.7,308.39 267.2,311.28 267.7,313.93 268.2,316.30 268.7,318.36 269.2,320.08 269.7,321.44 270.2,320.49 270.7,318.87 271.2,316.91 271.7,314.62 272.2,312.04 272.7,309.22 273.2,306.19 273.7,303.02 274.2,299.75 274.7,296.45 275.2,293.18 275.7,289.99 276.2,286.96 276.7,284.12 277.2,281.53 277.7,279.22 278.2,277.24 278.7,275.59 279.2,274.49 279.7,275.83 280.2,277.53 280.7,279.57 281.2,281.92 281.7,284.56 282.2,287.43 282.7,290.50 283.2,293.70 283.7,296.98 284.2,300.28 284.7,303.53 285.2,306.69 285.7,309.69 286.2,312.47 286.7,315.01 287.2,317.24 287.7,319.16 288.2,320.72 288.7,321.24 289.2,319.82 289.7,318.05 290.2,315.94 290.7,313.52 291.2,310.83 291.7,307.91 292.2,304.81 292.7,301.59 293.2,298.30 293.7,295.00 294.2,291.76 294.7,288.64 295.2,285.68 295.7,282.94 296.2,280.47 296.7,278.31 297.2,276.47 297.7,274.98 298.2,275.04 298.7,276.54 299.2,278.39 299.7,280.57 300.2,283.05 300.7,285.79 301.2,288.76 301.7,291.89 302.2,295.13 302.7,298.43 303.2,301.72 303.7,304.94 304.2,308.03 304.7,310.94 305.2,313.62 305.7,316.03 306.2,318.13 306.7,319.89 307.2,321.29 307.7,320.66 308.2,319.09 308.7,317.16 309.2,314.91 309.7,312.37 310.2,309.57 310.7,306.56 311.2,303.40 311.7,300.14 312.2,296.84 312.7,293.57 313.2,290.37 313.7,287.31 314.2,284.45 314.7,281.82 315.2,279.48 315.7,277.46 316.2,275.77 316.7,274.45 317.2,275.65 317.7,277.31 318.2,279.31 318.7,281.62 319.2,284.23 319.7,287.07 320.2,290.12 320.7,293.31 321.2,296.58 321.7,299.88 322.2,303.15 322.7,306.32 323.2,309.34 323.7,312.15 324.2,314.72 324.7,316.99 325.2,318.94 325.7,320.55 326.2,321.39 326.7,320.01 327.2,318.28 327.7,316.21 328.2,313.83 328.7,311.17 329.2,308.27 329.7,305.19 330.2,301.98 330.7,298.69 331.2,295.40 331.7,292.15 332.2,289.00 332.7,286.02 333.2,283.26 333.7,280.76 334.2,278.55 334.7,276.67 335.2,275.14 335.7,274.88 336.2,276.34 336.7,278.15 337.2,280.29 337.7,282.74 338.2,285.45 338.7,288.39 339.2,291.51 339.7,294.74 340.2,298.03 340.7,301.32 341.2,304.56 341.7,307.67 342.2,310.60 342.7,313.32 343.2,315.76 343.7,317.89 344.2,319.69 344.7,321.14 345.2,320.83 345.7,319.29 346.2,317.41 346.7,315.20 347.2,312.69 347.7,309.92 348.2,306.93 348.7,303.79 349.2,300.54 349.7,297.24 350.2,293.96 350.7,290.75 351.2,287.67 351.7,284.78 352.2,282.12 352.7,279.75 353.2,277.68 353.7,275.96 354.2,274.59 354.7,275.48 355.2,277.09 355.7,279.05 356.2,281.33 356.7,283.90 357.2,286.72 357.7,289.75 358.2,292.92 358.7,296.19 359.2,299.49 359.7,302.76 360.2,305.94 360.7,308.98 361.2,311.83 361.7,314.43 362.2,316.74 362.7,318.73 363.2,320.38 363.7,321.53 364.2,320.20 364.7,318.51 365.2,316.48 365.7,314.13 366.2,311.50 366.7,308.63 367.2,305.57 367.7,302.37 368.2,299.09 368.7,295.79 369.2,292.53 369.7,289.37 370.2,286.37 370.7,283.58 371.2,281.04 371.7,278.80 372.2,276.88 372.7,275.31 373.2,274.73 373.7,276.14 374.2,277.91 374.7,280.02 375.2,282.43 375.7,285.11 376.2,288.03 376.7,291.13 377.2,294.35 377.7,297.64 378.2,300.93 378.7,304.17 379.2,307.30 379.7,310.26 380.2,313.00 380.7,315.48 381.2,317.65 381.7,319.50 382.2,320.99 382.7,320.99 383.2,319.50 383.7,317.65 384.2,315.48 384.7,313.00 385.2,310.26 385.7,307.30 386.2,304.17 386.7,300.93 387.2,297.64 387.7,294.35 388.2,291.13 388.7,288.03 389.2,285.11 389.7,282.43 390.2,280.02 390.7,277.91 391.2,276.14 391.7,274.73 392.2,275.31 392.7,276.88 393.2,278.80 393.7,281.04 394.2,283.58 394.7,286.37 395.2,289.37 395.7,292.53 396.2,295.79 396.7,299.09 397.2,302.37 397.7,305.57 398.2,308.63 398.7,311.50 399.2,314.13 399.7,316.48 400.2,318.51 400.7,320.20 401.2,321.53 401.7,320.38 402.2,318.73 402.7,316.74 403.2,314.43 403.7,311.83 404.2,308.98 404.7,305.94 405.2,302.76 405.7,299.49 406.2,296.19 406.7,292.92 407.2,289.75 407.7,286.72 408.2,283.90 408.7,281.33 409.2,279.05 409.7,277.09 410.2,275.48 410.7,274.59 411.2,275.96 411.7,277.68 412.2,279.75 412.7,282.12 413.2,284.78 413.7,287.67 414.2,290.75 414.7,293.96 415.2,297.24 415.7,300.54 416.2,303.79 416.7,306.93 417.2,309.92 417.7,312.69 418.2,315.20 418.7,317.41 419.2,319.29 419.7,320.83 420.2,321.14 420.7,319.69 421.2,317.89 421.7,315.76 422.2,313.32 422.7,310.60 423.2,307.67 423.7,304.56 424.2,301.32 424.7,298.03 425.2,294.74 425.7,291.51 426.2,288.39 426.7,285.45 427.2,282.74 427.7,280.29 428.2,278.15 428.7,276.34 429.2,274.88 429.7,275.14 430.2,276.67 430.7,278.55 431.2,280.76 431.7,283.26 432.2,286.02 432.7,289.00 433.2,292.15 433.7,295.40 434.2,298.69 434.7,301.98 435.2,305.19 435.7,308.27 436.2,311.17 436.7,313.83 437.2,316.21 437.7,318.28 438.2,320.01 438.7,321.39 439.2,320.55 439.7,318.94 440.2,316.99 440.7,314.72 441.2,312.15 441.7,309.34 442.2,306.32 442.7,303.15 443.2,299.88 443.7,296.58 444.2,293.31 444.7,290.12 445.2,287.07 445.7,284.23 446.2,281.62 446.7,279.31 447.2,277.31 447.7,275.65 448.2,274.45 448.7,275.77 449.2,277.46 449.7,279.48 450.2,281.82 450.7,284.45 451.2,287.31 451.7,290.37 452.2,293.57 452.7,296.84 453.2,300.14 453.7,303.40 454.2,306.56 454.7,309.57 455.2,312.37 455.7,314.91 456.2,317.16 456.7,319.09 457.2,320.66 457.7,321.42 458.2,320.68 458.7,319.41 459.2,317.64 459.7,315.43 460.2,312.85 460.7,309.99 461.2,306.93 461.7,303.78 462.2,300.65 462.7,297.62 463.2,294.81 463.7,292.30 464.2,290.17 464.7,288.49 465.2,287.33 465.7,286.70 466.2,286.62 466.7,286.78 467.2,287.13 467.7,287.65 468.2,288.32 468.7,289.12 469.2,290.02 469.7,290.99 470.2,292.00 470.7,293.01 471.2,293.99 471.7,294.91 472.2,295.73 472.7,296.43 473.2,296.98 473.7,297.36 474.2,297.57 474.7,298.04 475.2,297.53 475.7,297.87 476.2,297.84 476.7,297.89 477.2,297.66 477.7,297.74 478.2,297.86 478.7,297.75 479.2,297.91 479.7,297.76 480.2,297.76 480.7,297.47 481.2,297.88 481.7,297.79 482.2,297.61 482.7,297.98 483.2,298.00 483.7,297.77 484.2,297.58 484.7,297.78 485.2,297.52 485.7,297.54 486.2,297.75 486.7,297.29 487.2,297.16 487.7,296.83 488.2,296.13 488.7,296.62 489.2,296.61 489.7,297.44 490.2,297.84 490.7,297.81 491.2,297.49 491.7,297.80 492.2,297.71 492.7,298.12 493.2,297.55 493.7,298.05 494.2,298.15 494.7,297.96 495.2,298.02 495.7,297.59 496.2,298.14 496.7,297.79 497.2,298.12 497.7,298.09 498.2,297.57 498.7,298.00 499.2,298.10 499.7,297.50 500.2,297.70 500.7,297.98 501.2,297.56 501.7,298.08 502.2,297.64 502.7,298.02 503.2,297.55 503.7,297.80 504.2,298.09 504.7,297.60 505.2,297.63 505.7,297.58 506.2,297.07 506.7,296.50 507.2,296.23 507.7,296.29 508.2,297.21 508.7,297.40 509.2,297.93 509.7,297.57 510.2,298.00 510.7,297.53 511.2,297.82 511.7,297.90 512.2,297.70 512.7,298.06 513.2,297.84 513.7,297.86 514.2,298.07 514.7,297.52 515.2,298.15 515.7,297.89 516.2,297.73 516.7,298.01 517.2,297.64 517.7,298.14 518.2,297.85 518.7,297.70 519.2,297.99 519.7,297.76 520.2,297.57 520.7,297.97 521.2,297.48 521.7,298.02 522.2,297.63 522.7,297.90 523.2,298.14 523.7,297.86 524.2,297.91 524.7,297.52 525.2,296.93 525.7,296.57 526.2,296.28 526.7,296.53 527.2,296.78 527.7,297.21 528.2,297.85 528.7,297.54 529.2,297.61 529.7,297.91 530.2,297.47 530.7,297.45 531.2,297.70 531.7,297.52 532.2,297.70 532.7,297.61 533.2,297.86 533.7,297.86 534.2,297.59 534.7,297.89 535.2,297.78 535.7,297.54 536.2,298.11 536.7,297.62 537.2,297.55 537.7,297.52 538.2,297.90 538.7,298.06 539.2,298.00 539.7,297.73 540.2,297.63 540.7,297.46 541.2,297.90 541.7,297.84 542.2,297.70 542.7,297.90 543.2,297.76 543.7,297.96 544.2,297.44 544.7,296.72 545.2,296.81 545.7,296.13 546.2,296.85 546.7,297.13 547.2,297.39 547.7,297.49 548.2,298.00 548.7,297.46 549.2,297.84 549.7,298.11 550.2,297.55 550.7,297.59 551.2,297.88 551.7,297.80 552.2,297.90 552.7,298.02 553.2,297.57 553.7,297.67 554.2,297.66 554.7,297.48 555.2,298.07 555.7,298.00 556.2,297.95 556.7,297.45 557.2,298.04 557.7,297.97 558.2,297.78 558.7,297.97 559.2,297.77 559.7,297.61 560.2,297.52 560.7,297.61 561.2,297.48 561.7,297.68 562.2,297.97 562.7,297.94 563.2,298.04 563.7,297.95 564.2,297.64 564.7,297.84 565.2,297.76 565.7,298.00 566.2,297.82 566.7,297.64 567.2,297.90 567.7,298.13 568.2,297.60 568.7,298.07 569.2,297.46 569.7,297.63 570.2,297.62 570.7,297.97 571.2,298.11 571.7,297.97 572.2,297.68 572.7,298.07 573.2,297.68 573.7,297.62 574.2,298.09 574.7,297.89 575.2,297.93 575.7,297.92 576.2,298.14 576.7,297.78 577.2,298.04 577.7,297.94 578.2,298.05 578.7,297.76 579.2,297.96 579.7,297.85 580.2,297.67 580.7,297.60 581.2,297.89 581.7,297.50 582.2,298.09 582.7,297.55 583.2,297.47 583.7,297.52 584.2,298.10 584.7,297.69 585.2,297.55 585.7,297.47 586.2,297.48 586.7,297.93 587.2,297.89 587.7,297.94 588.2,297.97 588.7,297.50 589.2,297.86 589.7,297.70 590.2,298.02 590.7,298.02 591.2,298.07 591.7,297.50 592.2,298.06 592.7,298.09 593.2,298.11 593.7,297.52 594.2,297.59 594.7,297.53 595.2,297.47 595.7,298.04 596.2,298.02 596.7,297.89 597.2,298.03 597.7,297.89 598.2,297.65 598.7,297.52 599.2,297.52 599.7,297.98 600.2,297.59 600.7,297.67 601.2,297.75 601.7,297.46 602.2,297.63 602.7,297.65 603.2,297.95 603.7,297.71 604.2,297.67 604.7,298.12 605.2,297.80 605.7,298.05 606.2,297.88 606.7,297.47 607.2,297.74 607.7,297.76 608.2,297.99 608.7,297.69 609.2,297.94 609.7,297.83 610.2,297.60 610.7,298.05 611.2,297.51 611.7,298.02 612.2,297.57 612.7,297.45 613.2,297.59 613.7,297.98 614.2,298.13 614.7,297.45 615.2,297.79 615.7,297.79 616.2,298.01 616.7,297.58 617.2,297.80 617.7,297.69 618.2,297.66 618.7,296.88 619.2,296.99 619.7,296.15 620.2,296.48 620.7,297.19 621.2,297.42 621.7,297.53 622.2,297.90 622.7,297.51 623.2,298.00 623.7,297.94 624.2,298.00 624.7,297.89 625.2,297.70 625.7,297.73 626.2,297.73 626.7,298.07 627.2,297.51 627.7,298.07 628.2,297.47 628.7,297.59 629.2,297.63 629.7,298.08 630.2,297.80 630.7,297.72 631.2,298.07 631.7,297.61 632.2,297.77 632.7,297.82 633.2,297.98 633.7,297.98 634.2,297.90 634.7,297.69 635.2,297.68 635.7,297.56 636.2,298.04 636.7,297.76 637.2,297.44 637.7,296.67 638.2,296.48 638.7,296.64 639.2,296.88 639.7,296.94 640.2,297.55 640.7,298.07 641.2,297.62 641.7,297.58 642.2,297.66 642.7,297.94 643.2,298.04 643.7,297.56 644.2,297.56 644.7,297.62 645.2,297.68 645.7,297.82 646.2,297.56 646.7,297.68 647.2,297.58 647.7,298.13 648.2,297.96 648.7,297.52 649.2,298.12 649.7,297.52 650.2,297.72 650.7,298.14 651.2,298.01 651.7,297.96 652.2,297.75 652.7,297.59 653.2,297.90 653.7,297.52 654.2,297.59 654.7,297.72 655.2,297.32 655.7,297.20 656.2,297.10 656.7,296.66 657.2,296.45 657.7,296.92 658.2,297.17 658.7,297.32 659.2,297.87 659.7,297.73 660.2,297.97 660.7,298.09 661.2,297.75 661.7,297.85 662.2,297.97 662.7,297.74 663.2,297.61 663.7,297.96 664.2,298.07 664.7,297.99 665.2,297.94 665.7,298.05 666.2,297.93 666.7,297.90 667.2,297.77 667.7,297.67 668.2,297.89 668.7,297.52 669.2,297.74 669.7,298.00 670.2,297.95 670.7,297.89 671.2,297.63 671.7,297.75 672.2,297.77 672.7,297.89 673.2,297.74 673.7,297.77 674.2,297.58 674.7,296.68 675.2,296.63 675.7,296.64 676.2,296.75 676.7,297.19 677.2,297.91 677.7,297.48 678.2,297.83 678.7,297.56 679.2,298.00 679.7,298.11 680.2,297.81 680.7,297.52 681.2,297.85 681.7,297.83 682.2,297.95 682.7,297.81 683.2,297.90 683.7,298.03 684.2,297.82 684.7,297.74 685.2,298.11 685.7,297.60 686.2,297.93 686.7,297.72 687.2,297.98 687.7,297.54 688.2,298.14 688.7,297.70 689.2,297.49 689.7,297.64 690.2,297.73 690.7,297.46 691.2,297.74 691.7,297.74 692.2,297.94 692.7,297.70 693.2,297.64 693.7,297.61 694.2,297.97 694.7,298.11 695.2,297.82 695.7,297.60 696.2,298.01 696.7,297.72 697.2,297.60 697.7,297.54 698.2,297.99 698.7,298.02 699.2,297.89 699.7,297.78 700.2,297.84 700.7,297.61 701.2,298.12 701.7,297.70 702.2,297.90 702.7,298.02 703.2,298.02 703.7,297.78 704.2,297.66 704.7,297.83 705.2,297.54 705.7,298.03 706.2,297.70 706.7,298.05 707.2,297.64 707.7,297.71 708.2,297.63 708.7,297.75 709.2,297.58 709.7,297.45 710.2,297.96 710.7,297.65 711.2,297.47 711.7,297.14 712.2,296.89 712.7,296.47 713.2,296.55 713.7,296.94 714.2,297.10 714.7,297.88 715.2,298.05 715.7,297.49 716.2,298.03 716.7,298.08 717.2,298.00 717.7,297.55 718.2,298.03 718.7,297.89 719.2,297.46 719.7,297.46 720.2,298.12 720.7,297.91 721.2,297.63 721.7,297.52 722.2,297.55 722.7,297.61 723.2,297.99 723.7,297.69 724.2,297.56 724.7,298.08 725.2,298.00 725.7,297.57 726.2,298.07 726.7,297.88 727.2,298.00 727.7,297.92 728.2,298.08 728.7,298.00 729.2,298.04 729.7,297.59 730.2,297.93 730.7,297.82 731.2,297.82 731.7,297.23 732.2,297.17 732.7,296.56 733.2,296.29 733.7,296.64 734.2,296.95 734.7,297.57 735.2,297.49 735.7,297.78 736.2,297.55 736.7,297.79 737.2,297.80 737.7,297.83 738.2,297.90 738.7,296.93 739.2,297.14 739.7,296.50 740.2,296.49 740.7,296.94 741.2,297.44 741.7,297.49 742.2,297.74 742.7,298.12 743.2,297.50 743.7,297.90 744.2,297.90 744.7,297.47 745.2,297.88 745.7,297.93 746.2,298.10 746.7,297.68 747.2,298.14 747.7,297.81 748.2,297.79 748.7,298.08 749.2,297.47 749.7,297.95 750.2,297.74 750.7,297.16 751.2,297.15 751.7,296.43 752.2,296.43 752.7,296.84 753.2,297.39 753.7,297.37 754.2,297.75 754.7,297.75 755.2,297.84 755.7,298.03 756.2,297.66 756.7,298.03 757.2,297.73 757.7,297.80 758.2,297.64 758.7,297.80 759.2,298.13 759.7,297.91 760.2,298.00 760.7,297.68 761.2,297.67 761.7,297.66 762.2,297.86 762.7,297.89 763.2,298.00 763.7,297.48 764.2,297.96 764.7,298.07 765.2,297.83 765.7,297.48 766.2,297.66 766.7,297.45 767.2,297.58 767.7,298.10 768.2,297.88 768.7,297.91 769.2,297.85 769.7,297.56 770.2,296.98 770.7,296.61 771.2,296.54 771.7,296.96 772.2,297.27 772.7,297.70 773.2,297.60 773.7,297.92 774.2,297.77 774.7,297.98 775.2,297.52 775.7,297.58 776.2,297.48 776.7,297.99 777.2,298.09 777.7,297.91 778.2,297.71 778.7,298.03 779.2,298.00 779.7,297.84 780.2,297.63 780.7,297.66 781.2,297.75 781.7,297.67 782.2,297.75 782.7,297.90 783.2,298.10 783.7,297.49 784.2,297.85 784.7,297.48 785.2,297.53 785.7,298.02 786.2,297.85 786.7,298.09 787.2,297.76 787.7,297.46 788.2,297.72 788.7,297.86 789.2,298.11 789.7,298.14 790.2,297.78 790.7,297.74 791.2,297.52 791.7,297.90 792.2,297.60 792.7,297.56 793.2,297.46 793.7,297.45 794.2,297.93 794.7,297.54 795.2,298.13 795.7,297.51 796.2,298.06 796.7,297.54 797.2,297.46 797.7,297.95 798.2,297.62 798.7,297.96 799.2,297.58 799.7,297.49 800.2,297.99 800.7,297.95 801.2,298.05 801.7,297.96 802.2,297.51 802.7,297.89 803.2,297.95 803.7,297.77 804.2,298.10 804.7,297.63 805.2,298.13 805.7,297.95 806.2,297.31 806.7,296.94 807.2,297.01 807.7,296.75 808.2,296.16 808.7,296.69 809.2,297.36 809.7,297.34 810.2,298.05 810.7,297.79 811.2,297.49 811.7,297.71 812.2,297.85 812.7,297.76 813.2,297.92 813.7,297.55 814.2,298.01 814.7,297.70 815.2,297.90 815.7,297.89 816.2,297.74 816.7,297.72 817.2,298.00 817.7,298.11 818.2,298.00 818.7,297.85 819.2,299.65 819.7,299.49 820.2,300.13 820.7,299.94 821.2,298.03 821.7,297.68 822.2,297.87 822.7,298.13 823.2,298.03 823.7,297.87 824.2,297.67 824.7,297.75 825.2,298.07 825.7,297.71 826.2,297.93 826.7,297.87 827.2,298.08 827.7,298.02 828.2,297.65 828.7,297.45 829.2,297.63 829.7,297.75 830.2,297.86 830.7,298.02 831.2,298.07 831.7,297.48 832.2,298.03 832.7,298.02 833.2,298.06 833.7,297.85 834.2,297.64 834.7,298.05 835.2,298.01 835.7,297.93 836.2,298.09 836.7,297.69 837.2,297.51 837.7,297.84 838.2,298.01 838.7,297.59 839.2,297.98 839.7,298.10 840.2,297.61 840.7,297.87 841.2,297.92 841.7,297.78 842.2,297.59 842.7,297.63 843.2,297.98 843.7,298.00 844.2,297.77 844.7,297.51 845.2,298.01 845.7,297.99 846.2,297.46 846.7,297.33 847.2,297.18 847.7,296.79 848.2,296.47 848.7,296.81 849.2,297.26 849.7,297.36 850.2,297.58" fill="none" stroke="#3c9c3c" stroke-width="1.05" stroke-linejoin="round"/>
<path d="M5.8 211.4H15L18.6 215.7L15 220H5.8Z" fill="#f6f614"/>
<path d="M5.9 502.2H15L18.4 506L15 509.8H5.9Z" fill="#22e022"/>
<path d="M866 210.8H857L853 215.4L857 220H866Z" fill="#f6f614"/>
<path d="M790 87.6H794.2V99.4H797.6M792.4 92.8L794.2 95L796 92.8" fill="none" stroke="#e8e840" stroke-width="1"/>
<path d="M42.5 515.2h8M42.5 517.6h1.8m1.2 0h1.8m1.2 0h2" stroke="#d4d480" stroke-width="0.9" fill="none"/>
<path d="M147 515.2h8M147 517.6h1.8m1.2 0h1.8m1.2 0h2" stroke="#40b040" stroke-width="0.9" fill="none"/>
</svg>
<svg width="1024" height="546" viewBox="0 0 1024 546" style="position:absolute;left:0;top:0">
<defs>
<linearGradient id="bg" x1="0" y1="0" x2="1" y2="1"><stop offset="0" stop-color="#22a4ec"/><stop offset="0.5" stop-color="#1e86dc"/><stop offset="1" stop-color="#1c62b4"/></linearGradient>
<linearGradient id="tg" x1="0" y1="0" x2="1" y2="0"><stop offset="0" stop-color="#2cb0ee"/><stop offset="1" stop-color="#1c70cc"/></linearGradient>
<linearGradient id="fo" x1="0" y1="0" x2="0" y2="1"><stop offset="0" stop-color="#bccadf"/><stop offset="1" stop-color="#7c9ccc"/></linearGradient>
<linearGradient id="ff" x1="0" y1="0" x2="0" y2="1"><stop offset="0" stop-color="#a4bee0"/><stop offset="1" stop-color="#5486c8"/></linearGradient>
<linearGradient id="sv" x1="0" y1="0" x2="0" y2="1"><stop offset="0" stop-color="#78a6e6"/><stop offset="1" stop-color="#5488d6"/></linearGradient>
<linearGradient id="gr" x1="0" y1="0" x2="0" y2="1"><stop offset="0" stop-color="#c4e470"/><stop offset="0.5" stop-color="#8cc83c"/><stop offset="1" stop-color="#48a41c"/></linearGradient>
</defs>
<path d="M85 36V58" stroke="#c8ccdf" stroke-width="1" opacity="0.600"/>
<path d="M138.6 36V58" stroke="#c8ccdf" stroke-width="1" opacity="0.600"/>
<path d="M219 36V58" stroke="#c8ccdf" stroke-width="1" opacity="0.600"/>
<path d="M324.7 36V58" stroke="#c8ccdf" stroke-width="1" opacity="0.600"/>
<path d="M406 36V58" stroke="#c8ccdf" stroke-width="1" opacity="0.600"/>
<path d="M460.6 36V58" stroke="#c8ccdf" stroke-width="1" opacity="0.600"/>
<path d="M489.5 36V58" stroke="#c8ccdf" stroke-width="1" opacity="0.600"/>
<path d="M522.6 36V58" stroke="#c8ccdf" stroke-width="1" opacity="0.600"/>
<path d="M7.6 40.4q0-2.6 2.6-2.6h4.6l2 1.7h11q2.8 0 2.8 2.6v11.4q0 2.1-2.2 2.1h-18.6q-2.2 0-2.2-2.1z" fill="url(#fo)" stroke="#7c98c0" stroke-width="0.6"/>
<path d="M7.9 43.6q8-2.4 22.4 0v10q0 1.8-1.9 1.8h-18.6q-1.9 0-1.9-1.8z" fill="url(#ff)" opacity="0.92"/>
<path d="M11.6 40.2c1.2-1.6 5-2.4 8-1.6c2.6 .8 3.7 2.6 3.7 5.2v5.8h3.2l-6.1 6.2-6.1-6.2h3.6v-5.2c0-2.6-2.2-4-6.3-4.200z" fill="url(#gr)" stroke="#4c9820" stroke-width="0.5"/>
<path d="M34.6 38h15.4l3.3 3.3v15h-18.700z" fill="url(#sv)" stroke="#5078b4" stroke-width="0.7"/>
<rect x="38" y="38.5" width="10.2" height="5.300" fill="#dfeafa"/>
<rect x="37.600" y="50.700" width="12.6" height="5.200" fill="#f2f6fd"/>
<rect x="39.400" y="39.400" width="1.800" height="3.200" fill="#7ca4e0"/>
<rect x="62.300" y="36.400" width="12.200" height="7" rx="0.800" fill="#eef2fa" stroke="#90a8cc" stroke-width="0.6"/>
<rect x="57.600" y="43.200" width="22.200" height="11.400" rx="3" fill="#f4f6fb" stroke="#b4bcd0" stroke-width="0.7"/>
<path d="M61.400 42.400h14.200v2.600q0 1.800-1.800 1.800h-10.600q-1.800 0-1.800-1.800z" fill="#3f74b6"/>
<path d="M62.600 51.200h12.400l1.200 5.400h-14.800z" fill="#fcfcfc" stroke="#8890a0" stroke-width="0.5"/>
<path d="M61.800 50.800h13.800" stroke="#2c3440" stroke-width="1.500"/>
<rect x="89.8" y="37.9" width="18.6" height="18.8" rx="3" fill="url(#bg)"/>
<path d="M93.1 42.5h4M95.1 40.5v4M100.6 42.5h4M92.9 49.3l4.6 4.6M97.5 49.3l-4.6 4.600M100.6 51.6h5M103.1 49.1v5" stroke="#fff" fill="none" stroke-width="1.5"/>
<rect x="115" y="37.9" width="18.6" height="18.8" rx="3" fill="url(#bg)"/>
<text x="124.1" y="53.2" font-family="Liberation Sans, sans-serif" font-weight="bold" font-size="15.2" fill="#fff" text-anchor="middle">R</text>
<rect x="142.3" y="35.3" width="24.6" height="23.6" fill="#dae7f6" stroke="#5a8cc6" stroke-width="1"/>
<rect x="146" y="37.9" width="18.6" height="18.8" rx="3" fill="url(#bg)"/>
<path d="M148.4 52h3.6v-9.4h6.4v9.4h3.6" stroke="#fff" fill="none" stroke-width="1.5"/>
<rect x="170" y="37.9" width="18.6" height="18.8" rx="3" fill="url(#bg)"/>
<path d="M171.8 50.600h4.600M182.200 50.600h4.600" stroke="#fff" fill="none" stroke-width="1.5"/>
<path d="M176.600 42.600h7.400" stroke="#fff" fill="none" stroke-width="1.5" stroke-dasharray="1.900 0.850"/>
<path d="M177.100 44.400v4.800M183.600 44.400v4.800" stroke="#fff" fill="none" stroke-width="1.300" stroke-dasharray="1.5 1.100"/>
<path d="M194.800 54.700L213.900 41.200V54.700Z" fill="url(#tg)"/>
<rect x="222.6" y="35.3" width="24.6" height="23.6" fill="#dae7f6" stroke="#5a8cc6" stroke-width="1"/>
<rect x="226.4" y="37.9" width="18.6" height="18.8" rx="3" fill="url(#bg)"/>
<path d="M227.400 41.700h16M230.300 39v16.600" stroke="#fff" fill="none" stroke-width="1.600"/>
<path d="M233 44.300l8 2.700-2.900 1.500 4 4.200-1.700 1.600-4-4.200-1.400 2.900z" fill="#fff"/>
<rect x="250.6" y="37.9" width="18.6" height="18.8" rx="3" fill="url(#bg)"/>
<path d="M253.200 44.600h12.800M257.200 40.600v13M262.500 40.600v13" stroke="#fff" fill="none" stroke-width="1.200"/>
<path d="M253.200 50h12.800" stroke="#fff" fill="none" stroke-width="1.300" stroke-dasharray="1.600 1"/>
<rect x="275.2" y="37.9" width="18.6" height="18.8" rx="3" fill="url(#bg)"/>
<path d="M281 40.8v13" stroke="#fff" fill="none" stroke-width="1.5"/><path d="M287.2 40.8v13" stroke="#fff" fill="none" stroke-width="1.8" stroke-dasharray="2.4 2.6"/>
<rect x="299.8" y="37.9" width="18.6" height="18.8" rx="3" fill="url(#bg)"/>
<path d="M302.8 44.2h12.8" stroke="#fff" fill="none" stroke-width="1.5"/><path d="M302.8 50.4h12.8" stroke="#fff" fill="none" stroke-width="1.4" stroke-dasharray="2.8 2.2"/>
<rect x="330.4" y="37.9" width="18.6" height="18.8" rx="3" fill="url(#bg)"/>
<path d="M332.8 51.4h5.4v-4.2h5.4v-4.4h3" stroke="#fff" fill="none" stroke-width="1.5"/>
<rect x="355" y="37.9" width="18.6" height="18.8" rx="3" fill="url(#bg)"/>
<path d="M357.4 49l4.4-3 3.4 2.6 6-4" stroke="#fff" fill="none" stroke-width="1.3"/>
<rect x="377.4" y="35.3" width="24.6" height="23.6" fill="#dae7f6" stroke="#5a8cc6" stroke-width="1"/>
<rect x="380.5" y="37.9" width="18.6" height="18.8" rx="3" fill="url(#bg)"/>
<path d="M382.500 46.800c2.200-4.700 4.400-4.700 6.900-.100s5 4.700 7.300-.300" stroke="#fff" fill="none" stroke-width="1.600"/>
<rect x="410.6" y="37.9" width="18.6" height="18.8" rx="3" fill="url(#bg)"/>
<path d="M416.200 48.200a4.300 4.300 0 1 1 4.600 4.200" stroke="#fff" fill="none" stroke-width="2.300"/>
<path d="M412.600 46.900h7l-3.700 4.500z" fill="#fff"/>
<rect x="435" y="37.9" width="18.6" height="18.8" rx="3" fill="url(#bg)"/>
<text x="444.4" y="46.4" font-family="Liberation Sans, sans-serif" font-weight="bold" font-size="7.6" fill="#fff" text-anchor="middle">AU</text>
<text x="444.4" y="54" font-family="Liberation Sans, sans-serif" font-weight="bold" font-size="7.6" fill="#fff" text-anchor="middle">TO</text>
<circle cx="475.6" cy="47.2" r="9.6" fill="url(#bg)"/>
<path d="M472.4 42.4l8 4.8-8 4.8z" fill="#fff"/>
<rect x="494.2" y="35.3" width="24.6" height="23.6" fill="#dae7f6" stroke="#5a8cc6" stroke-width="1"/>
<circle cx="506.300" cy="46.800" r="8.900" fill="url(#bg)"/>
<path d="M503.800 43.300v6.900M508.900 43.300v6.900" stroke="#fff" stroke-width="2.200" fill="none"/>
<circle cx="537" cy="47.2" r="9.6" fill="url(#bg)"/>
<text x="537" y="52.6" font-family="Liberation Sans, sans-serif" font-weight="bold" font-size="14" fill="#fff" text-anchor="middle">?</text>
<rect x="3.4" y="3" width="10" height="8" fill="#404848" stroke="#202020" stroke-width="0.6"/><rect x="4.6" y="4.2" width="7.6" height="4.6" fill="#708870"/><path d="M2.6 12.4h11.6" stroke="#303030" stroke-width="1.2"/>
<path d="M933.300 8h7.600" stroke="#222" stroke-width="0.900"/>
<rect x="967.400" y="5.600" width="5.600" height="5.400" rx="0.800" fill="none" stroke="#222" stroke-width="1"/><path d="M969.200 5.600V4h5.600v5.400H973" fill="none" stroke="#222" stroke-width="0.900"/>
<path d="M1001.700 4.200l7.200 7.200M1008.900 4.200l-7.200 7.200" stroke="#222" stroke-width="0.900"/>
<path d="M8.200 67L5 70.200L8.200 73.400Z" fill="none" stroke="#303030" stroke-width="1"/>
<path d="M858.500 67L861.900 70.200L858.500 73.400Z" fill="none" stroke="#303030" stroke-width="1"/>
</svg>
<svg width="1024" height="546" viewBox="0 0 1024 546" style="position:absolute;left:0;top:0">
<path d="M933 120.4H878.4V208.4H1010.6V120.4H976" fill="none" stroke="#e5e5e5" stroke-width="1"/>
<path d="M938 223.6H878.4V435.4H1010.6V223.6H971" fill="none" stroke="#e5e5e5" stroke-width="1"/>
<path d="M939 450.6H878.4V520M970 450.6H1010.6V520" fill="none" stroke="#e5e5e5" stroke-width="1"/>
<path d="M1002.500 69v-3.200h3v3.200M1004.900 65.800v3.200M1001.300 69h5.400M1004 69v2.400" fill="none" stroke="#222" stroke-width="0.900"/>
<path d="M1013.900 65.400l5.400 5.400M1019.300 65.400l-5.400 5.400" stroke="#222" stroke-width="1.300"/>
<rect x="874.6" y="76.6" width="149" height="15.6" fill="#e2e2e2" stroke="#adadad" stroke-width="0.8"/><path d="M1013.6 83.4l3 3 3-3" fill="none" stroke="#404040" stroke-width="0.9"/>
<rect x="884.4" y="144.4" width="55.4" height="16" fill="#e2e2e2" stroke="#b0b0b0" stroke-width="0.8"/><path d="M929.9999999999999 151.4l2.6 2.6 2.6-2.6" fill="none" stroke="#404040" stroke-width="0.9"/>
<rect x="884.4" y="183.6" width="55.4" height="16" fill="#e2e2e2" stroke="#b0b0b0" stroke-width="0.8"/><path d="M929.9999999999999 190.6l2.6 2.6 2.6-2.6" fill="none" stroke="#404040" stroke-width="0.9"/>
<rect x="884.4" y="251.4" width="55.4" height="16" fill="#e2e2e2" stroke="#b0b0b0" stroke-width="0.8"/><path d="M929.9999999999999 258.4l2.6 2.6 2.6-2.6" fill="none" stroke="#404040" stroke-width="0.9"/>
<rect x="884.4" y="277.6" width="55.4" height="16" fill="#cccccc" stroke="#c4c4c4" stroke-width="0.8"/><path d="M929.9999999999999 284.6l2.6 2.6 2.6-2.6" fill="none" stroke="#a8a8a8" stroke-width="0.9"/>
<rect x="884.4" y="303.8" width="55.4" height="16" fill="#e2e2e2" stroke="#b0b0b0" stroke-width="0.8"/><path d="M929.9999999999999 310.8l2.6 2.6 2.6-2.6" fill="none" stroke="#404040" stroke-width="0.9"/>
<rect x="884.4" y="356.4" width="55.4" height="16" fill="#e2e2e2" stroke="#b0b0b0" stroke-width="0.8"/><path d="M929.9999999999999 363.4l2.6 2.6 2.6-2.6" fill="none" stroke="#404040" stroke-width="0.9"/>
<rect x="884.4" y="382.6" width="55.4" height="16" fill="#cccccc" stroke="#c4c4c4" stroke-width="0.8"/><path d="M929.9999999999999 389.6l2.6 2.6 2.6-2.6" fill="none" stroke="#a8a8a8" stroke-width="0.9"/>
<rect x="884.4" y="408.6" width="55.4" height="16" fill="#e2e2e2" stroke="#b0b0b0" stroke-width="0.8"/><path d="M929.9999999999999 415.6l2.6 2.6 2.6-2.6" fill="none" stroke="#404040" stroke-width="0.9"/>
<rect x="959.8" y="466.2" width="55.4" height="16" fill="#e2e2e2" stroke="#b0b0b0" stroke-width="0.8"/><path d="M1005.3999999999999 473.2l2.6 2.6 2.6-2.6" fill="none" stroke="#404040" stroke-width="0.9"/>
<rect x="959.8" y="492.8" width="55.4" height="16" fill="#e2e2e2" stroke="#b0b0b0" stroke-width="0.8"/><path d="M1005.3999999999999 499.8l2.6 2.6 2.6-2.6" fill="none" stroke="#404040" stroke-width="0.9"/>
<rect x="884.4" y="235.6" width="9.8" height="9.8" fill="#fff" stroke="#333" stroke-width="0.8"/><path d="M886.4 240.6l2.2 2.4 4-5" fill="none" stroke="#222" stroke-width="1.2"/>
<rect x="884.4" y="340.4" width="9.8" height="9.8" fill="#fff" stroke="#333" stroke-width="0.8"/><path d="M886.4 345.4l2.2 2.4 4-5" fill="none" stroke="#222" stroke-width="1.2"/>
<rect x="968" y="309.2" width="9.8" height="9.8" fill="#fff" stroke="#333" stroke-width="0.8"/>
<rect x="968" y="414" width="9.8" height="9.8" fill="#fff" stroke="#333" stroke-width="0.8"/>
<ellipse cx="984.4" cy="167.9" rx="26.9" ry="26.3" fill="#e8e8e8" stroke="#5c5c5c" stroke-width="0.8"/>
<ellipse cx="984.6999999999999" cy="168.1" rx="24.8" ry="24.3" fill="#b8b8b8" stroke="#4c4c4c" stroke-width="0.8"/>
<path d="M970.1999999999999 183.6l-8.300 8.200M1002.8 185.0l6.100 6.200" stroke="#2c2c2c" stroke-width="1.400"/>
<path d="M1000.1999999999999 151.4l2 -2" stroke="#404040" stroke-width="1.400"/>
<ellipse cx="985.5" cy="168.79999999999998" rx="21.2" ry="20.7" fill="#0a0ac8" stroke="#101070" stroke-width="0.700"/>
<path d="M990 168L1002.6 165.4" stroke="#fff" stroke-width="1.5"/>
<ellipse cx="984.5" cy="269.40000000000003" rx="26.9" ry="26.3" fill="#e8e8e8" stroke="#5c5c5c" stroke-width="0.8"/>
<ellipse cx="984.8" cy="269.6" rx="24.8" ry="24.3" fill="#b8b8b8" stroke="#4c4c4c" stroke-width="0.8"/>
<path d="M970.3 285.1l-8.300 8.200M1002.9 286.5l6.100 6.200" stroke="#2c2c2c" stroke-width="1.400"/>
<path d="M1000.3 252.90000000000003l2 -2" stroke="#404040" stroke-width="1.400"/>
<ellipse cx="985.6" cy="270.3" rx="21.2" ry="20.7" fill="#f8f80c" stroke="#707010" stroke-width="0.700"/>
<path d="M973.2 261L981.9 267.2" stroke="#f4f4a4" stroke-width="1.5"/>
<ellipse cx="984.5" cy="375.7" rx="26.9" ry="26.3" fill="#e8e8e8" stroke="#5c5c5c" stroke-width="0.8"/>
<ellipse cx="984.8" cy="375.9" rx="24.8" ry="24.3" fill="#b8b8b8" stroke="#4c4c4c" stroke-width="0.8"/>
<path d="M970.3 391.4l-8.300 8.200M1002.9 392.79999999999995l6.100 6.200" stroke="#2c2c2c" stroke-width="1.400"/>
<path d="M1000.3 359.2l2 -2" stroke="#404040" stroke-width="1.400"/>
<ellipse cx="985.6" cy="376.59999999999997" rx="21.2" ry="20.7" fill="#14e814" stroke="#107010" stroke-width="0.700"/>
<path d="M981.6 358L984.4 372.2" stroke="#d0f8d0" stroke-width="1.5"/>
</svg>
<svg width="1024" height="546" viewBox="0 0 1024 546" style="position:absolute;left:0;top:0">
<rect x="1011.4" y="111" width="12.6" height="406" fill="#f0f0f0"/>
<rect x="1012.4" y="128" width="11.6" height="262" fill="#cdcdcd"/>
<path d="M1014.6 121l3 -3 3 3" fill="none" stroke="#404040" stroke-width="1.2"/>
<path d="M1014.6 509.4l3 3 3-3" fill="none" stroke="#404040" stroke-width="1.2"/>
<rect x="874.4" y="516.8" width="137" height="12.6" fill="#f0f0f0"/>
<rect x="887.2" y="518.2" width="94.8" height="10.6" fill="#cdcdcd"/>
<path d="M881.6 520.6l-3 3 3 3" fill="none" stroke="#404040" stroke-width="1.2"/>
<path d="M1003.6 520.6l3 3-3 3" fill="none" stroke="#404040" stroke-width="1.2"/>
</svg>
<div class="a" style="left:0;top:529.4px;width:1024px;height:16.6px;background:#f0f0f0"></div>
<div id="txt" style="position:absolute;left:0;top:0;width:1024px;height:546px;will-change:transform">
<span class="t" id="t0" style="left:17.80px;top:4.00px;font-size:9.6px;color:#000;transform:scaleX(0.8541);">Hantek6022BE Ver 1.0.6</span>
<span class="t" id="t1" style="left:12.00px;top:20.00px;font-size:9.6px;color:#000;transform:scaleX(0.8848);"><u>F</u>ile</span>
<span class="t" id="t2" style="left:36.90px;top:20.00px;font-size:9.6px;color:#000;transform:scaleX(0.8818);"><u>V</u>iew</span>
<span class="t" id="t3" style="left:66.90px;top:20.00px;font-size:9.6px;color:#000;transform:scaleX(0.9510);">H<u>o</u>rizontal</span>
<span class="t" id="t4" style="left:119.60px;top:20.00px;font-size:9.6px;color:#000;transform:scaleX(0.8862);">V<u>e</u>rtical</span>
<span class="t" id="t5" style="left:159.80px;top:20.00px;font-size:9.6px;color:#000;transform:scaleX(0.8986);"><u>T</u>rigger</span>
<span class="t" id="t6" style="left:199.50px;top:20.00px;font-size:9.6px;color:#000;transform:scaleX(0.8993);"><u>D</u>isplay</span>
<span class="t" id="t7" style="left:239.40px;top:20.00px;font-size:9.6px;color:#000;transform:scaleX(0.8890);"><u>C</u>ursor</span>
<span class="t" id="t8" style="left:276.60px;top:20.00px;font-size:9.6px;color:#000;transform:scaleX(0.9758);"><u>U</u>tility</span>
<span class="t" id="t9" style="left:311.20px;top:20.00px;font-size:9.6px;color:#000;transform:scaleX(0.9418);"><u>H</u>elp</span>
<span class="t" id="t10" style="left:39.00px;top:66.00px;font-size:9.6px;color:#000;transform:scaleX(0.8751);font-weight:bold;">Scope</span>
<span class="t" id="t11" style="left:14.00px;top:89.00px;font-size:9.4px;color:#cc1c1c;transform:scaleX(0.9267);">STOP</span>
<span class="t" id="t12" style="left:802.00px;top:90.00px;font-size:9.6px;color:#000;transform:scaleX(0.9894);">CH1</span>
<span class="t" id="t13" style="left:830.00px;top:90.00px;font-size:9.6px;color:#d8d860;transform:scaleX(0.9368);">0.00uV</span>
<span class="t" id="t14" style="left:21.80px;top:512.00px;font-size:9.6px;color:#dcdc88;transform:scaleX(0.9634);">CH1</span>
<span class="t" id="t15" style="left:58.60px;top:512.00px;font-size:9.6px;color:#dcdc88;transform:scaleX(0.8892);">1.00V</span>
<span class="t" id="t16" style="left:126.60px;top:512.00px;font-size:9.6px;color:#46b846;transform:scaleX(0.9738);">CH2</span>
<span class="t" id="t17" style="left:162.90px;top:512.00px;font-size:9.6px;color:#46b846;transform:scaleX(0.9636);">500mV</span>
<span class="t" id="t18" style="left:691.00px;top:512.00px;font-size:9.6px;color:#d07838;transform:scaleX(0.9597);">Time: 1.000us</span>
<span class="t" id="t19" style="left:763.50px;top:512.00px;font-size:9.6px;color:#d07838;transform:scaleX(0.9409);">Sample Rate: 48MHz</span>
<span class="t" id="t20" style="left:3.50px;top:534.00px;font-size:9.4px;color:#000;transform:scaleX(0.9240);">Running...</span>
<span class="t" id="t21" style="left:946.20px;top:534.00px;font-size:9.4px;color:#000;transform:scaleX(0.9131);">01-12-2018</span>
<span class="t" id="t22" style="left:994.50px;top:534.00px;font-size:9.4px;color:#000;transform:scaleX(0.8309);">15:59</span>
<span class="t" id="t23" style="left:877.30px;top:63.00px;font-size:9.6px;color:#000;transform:scaleX(0.9322);">Control Panel</span>
<span class="t" id="t24" style="left:877.30px;top:80.00px;font-size:9.8px;color:#000;transform:scaleX(0.8603);">Scope</span>
<span class="t" id="t25" style="left:936.00px;top:117.00px;font-size:8.2px;color:#000;transform:scaleX(1.0034);">Horizontal</span>
<span class="t" id="t26" style="left:885.80px;top:132.00px;font-size:8.2px;color:#000;transform:scaleX(0.9046);">Time/DIV</span>
<span class="t" id="t27" style="left:888.20px;top:150.00px;font-size:8.2px;color:#000;transform:scaleX(0.8854);">1.000us</span>
<span class="t" id="t28" style="left:885.80px;top:170.00px;font-size:8.2px;color:#000;transform:scaleX(0.9330);">Format</span>
<span class="t" id="t29" style="left:888.20px;top:189.00px;font-size:8.2px;color:#000;transform:scaleX(0.9889);">Y-T</span>
<span class="t" id="t30" style="left:941.00px;top:220.00px;font-size:8.2px;color:#000;transform:scaleX(1.0052);">Vertical</span>
<span class="t" id="t31" style="left:896.90px;top:238.00px;font-size:8.2px;color:#000;transform:scaleX(0.8602);">CH1</span>
<span class="t" id="t32" style="left:888.20px;top:257.00px;font-size:8.2px;color:#000;transform:scaleX(0.9483);">1.00V</span>
<span class="t" id="t33" style="left:888.20px;top:283.00px;font-size:8.2px;color:#9a9a9a;transform:scaleX(0.8708);">DC</span>
<span class="t" id="t34" style="left:888.20px;top:309.00px;font-size:8.2px;color:#000;transform:scaleX(0.8433);">x1</span>
<span class="t" id="t35" style="left:980.00px;top:311.00px;font-size:8.2px;color:#000;transform:scaleX(0.9764);">Invert</span>
<span class="t" id="t36" style="left:896.90px;top:343.00px;font-size:8.2px;color:#000;transform:scaleX(0.8602);">CH2</span>
<span class="t" id="t37" style="left:888.20px;top:362.00px;font-size:8.2px;color:#000;transform:scaleX(0.9748);">500mV</span>
<span class="t" id="t38" style="left:888.20px;top:388.00px;font-size:8.2px;color:#9a9a9a;transform:scaleX(0.8708);">DC</span>
<span class="t" id="t39" style="left:888.20px;top:414.00px;font-size:8.2px;color:#000;transform:scaleX(0.8433);">x1</span>
<span class="t" id="t40" style="left:980.00px;top:416.00px;font-size:8.2px;color:#000;transform:scaleX(0.9764);">Invert</span>
<span class="t" id="t41" style="left:942.00px;top:447.00px;font-size:8.2px;color:#000;transform:scaleX(0.9750);">Trigger</span>
<span class="t" id="t42" style="left:887.80px;top:472.00px;font-size:8.2px;color:#000;transform:scaleX(0.9651);">Trigger Mode</span>
<span class="t" id="t43" style="left:962.60px;top:472.00px;font-size:8.2px;color:#000;transform:scaleX(0.9098);">Edge</span>
<span class="t" id="t44" style="left:887.80px;top:498.00px;font-size:8.2px;color:#000;transform:scaleX(1.0141);">Trigger Sweep</span>
<span class="t" id="t45" style="left:962.60px;top:498.00px;font-size:8.2px;color:#000;transform:scaleX(0.8953);">SINGLE</span>
<span class="t" style="left:10.2px;top:212px;font-size:8.8px;color:#000;">1</span>
<span class="t" style="left:9.6px;top:502px;font-size:8.6px;color:#063006;font-style:italic;">2</span>
<span class="t" style="left:859.3px;top:213px;font-size:8px;color:#000;">T</span>
</div>
</body></html>
